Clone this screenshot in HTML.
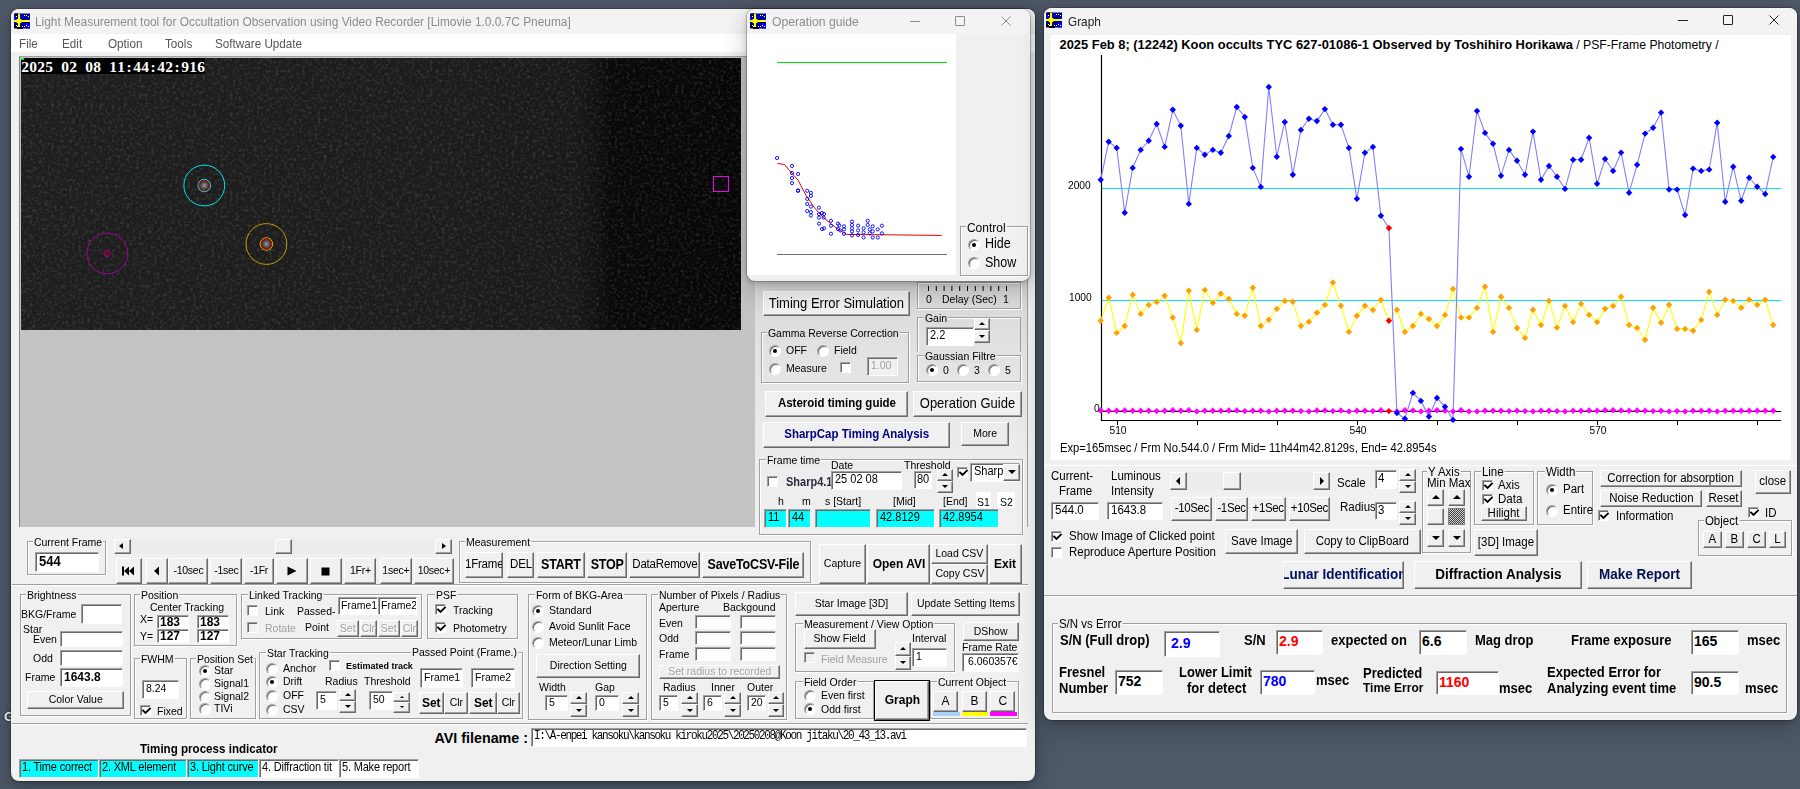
<!DOCTYPE html><html><head><meta charset="utf-8"><style>
*{margin:0;padding:0;box-sizing:border-box}
html,body{width:1800px;height:789px;overflow:hidden;background:#4e5868;font-family:"Liberation Sans",sans-serif;color:#000}
div{position:absolute}
.t{white-space:nowrap}
.win{background:#f0f0f0;border-radius:8px;box-shadow:0 0 0 1px rgba(0,0,0,.2),0 2px 6px rgba(0,0,0,.2),0 8px 26px rgba(0,0,0,.22)}
.tb{background:#f3f3f3;border-radius:8px 8px 0 0}
.btn{display:flex;justify-content:center;align-items:flex-start;background:#f0f0f0;border-top:1px solid #fff;border-left:1px solid #fff;border-right:1px solid #696969;border-bottom:1px solid #696969;box-shadow:inset -1px -1px 0 #a0a0a0;text-align:center;white-space:nowrap;overflow:hidden}
.inp{background:#fff;border-top:1px solid #a0a0a0;border-left:1px solid #a0a0a0;border-right:1px solid #fff;border-bottom:1px solid #fff;box-shadow:inset 1px 1px 0 #696969;padding-left:3px;white-space:nowrap;overflow:hidden}
.gb{border:1px solid #a0a0a0;box-shadow:inset 1px 1px 0 #fff,1px 1px 0 #fff}
.gbl{background:#f0f0f0;padding:0 1px}
.chk{border-top:1px solid #a0a0a0;border-left:1px solid #a0a0a0;border-right:1px solid #fff;border-bottom:1px solid #fff;box-shadow:inset 1px 1px 0 #696969;box-sizing:content-box}
.rad{border-radius:50%;background:#fff;border:1px solid;border-color:#a0a0a0 #fff #fff #a0a0a0;box-shadow:inset 1px 1px 0 #696969;box-sizing:content-box}
</style></head><body><div class="t" style="left:4px;top:709px;font-size:13px;line-height:15px;color:#fff;text-shadow:0 0 1px #000,0 0 1px #000;font-weight:bold">G</div>
<div class="win" style="left:11px;top:9px;width:1024px;height:772px;"></div>
<div class="tb" style="left:11px;top:9px;width:1024px;height:25px;"></div>
<svg style="position:absolute;left:14px;top:13px" width="16" height="16" viewBox="0 0 16 16"><rect x="0" y="0.5" width="16" height="15" fill="#000090"/><rect x="0" y="3" width="3" height="4" fill="#0000ff"/><rect x="7" y="3" width="3" height="2" fill="#0000ff"/><rect x="13" y="5" width="3" height="3" fill="#0000ff"/><rect x="12" y="10" width="4" height="5.5" fill="#0000ff"/><rect x="0" y="12" width="3" height="3" fill="#000"/><rect x="3" y="14.5" width="6" height="1.5" fill="#000"/><rect x="1" y="0.5" width="3" height="1.5" fill="#000"/><path d="M4 1 H6 V5.5 L8 7 H16 V9 H8 L6 10.5 V14 H4 V10.5 L2 9 H0 V7 H2 L4 5.5 Z" fill="#ffff00"/><g fill="#fff"><rect x="2" y="3" width="1" height="1"/><rect x="10" y="2" width="1" height="1"/><rect x="12" y="2" width="1" height="1"/><rect x="14" y="3" width="1" height="1"/><rect x="2" y="12" width="1" height="1"/><rect x="3" y="13" width="1" height="1"/><rect x="8" y="13" width="1" height="1"/><rect x="10" y="13" width="1" height="1"/><rect x="12" y="12" width="1" height="1"/><rect x="14" y="13" width="1" height="1"/></g></svg>
<div class="t" style="left:35px;top:14.0px;font-size:13.09px;line-height:15px;transform:scaleX(0.9091);transform-origin:0 50%;color:#8c8c8c;">Light Measurement tool for Occultation Observation using Video Recorder [Limovie 1.0.0.7C Pneuma]</div>
<div class="" style="left:11px;top:34px;width:1024px;height:18px;background:#fff"></div>
<div class="t" style="left:19px;top:36.0px;font-size:12.87px;line-height:15px;transform:scaleX(0.9091);transform-origin:0 50%;color:#555;">File</div>
<div class="t" style="left:62px;top:36.0px;font-size:12.87px;line-height:15px;transform:scaleX(0.9091);transform-origin:0 50%;color:#555;">Edit</div>
<div class="t" style="left:108px;top:36.0px;font-size:12.87px;line-height:15px;transform:scaleX(0.9091);transform-origin:0 50%;color:#555;">Option</div>
<div class="t" style="left:165px;top:36.0px;font-size:12.87px;line-height:15px;transform:scaleX(0.9091);transform-origin:0 50%;color:#555;">Tools</div>
<div class="t" style="left:215px;top:36.0px;font-size:12.87px;line-height:15px;transform:scaleX(0.9091);transform-origin:0 50%;color:#555;">Software Update</div>
<div class="" style="left:19px;top:56px;width:737px;height:471px;background:#c3c3c3;border-top:1px solid #a0a0a0;border-left:1px solid #808080"></div>
<div class="" style="left:21px;top:58px;width:720px;height:272px;background:linear-gradient(90deg,#1e1e1e 0%,#1c1c1c 60%,#191919 77%,#111 80%,#090909 82%,#070707 100%)"></div>
<svg style="position:absolute;left:21px;top:58px" width="720" height="272"><filter id="nz"><feTurbulence type="fractalNoise" baseFrequency="0.33" numOctaves="3" seed="4"/><feColorMatrix values="0 0 0 0 1  0 0 0 0 1  0 0 0 0 1  0 0 0 1.6 -0.75"/></filter><rect width="720" height="272" filter="url(#nz)" opacity="0.2"/></svg>
<div class="" style="left:21px;top:58px;width:184px;height:16px;background:#000"></div>
<div class="t" style="left:21px;top:58px;height:16px;line-height:17px;font-family:'Liberation Serif',serif;font-size:15.5px;font-weight:bold;color:#fff"><span style="position:absolute;left:0px;width:8px;text-align:center;display:inline-block">2</span><span style="position:absolute;left:8px;width:8px;text-align:center;display:inline-block">0</span><span style="position:absolute;left:16px;width:8px;text-align:center;display:inline-block">2</span><span style="position:absolute;left:24px;width:8px;text-align:center;display:inline-block">5</span><span style="position:absolute;left:32px;width:8px;text-align:center;display:inline-block"> </span><span style="position:absolute;left:40px;width:8px;text-align:center;display:inline-block">0</span><span style="position:absolute;left:48px;width:8px;text-align:center;display:inline-block">2</span><span style="position:absolute;left:56px;width:8px;text-align:center;display:inline-block"> </span><span style="position:absolute;left:64px;width:8px;text-align:center;display:inline-block">0</span><span style="position:absolute;left:72px;width:8px;text-align:center;display:inline-block">8</span><span style="position:absolute;left:80px;width:8px;text-align:center;display:inline-block"> </span><span style="position:absolute;left:88px;width:8px;text-align:center;display:inline-block">1</span><span style="position:absolute;left:96px;width:8px;text-align:center;display:inline-block">1</span><span style="position:absolute;left:104px;width:8px;text-align:center;display:inline-block">:</span><span style="position:absolute;left:112px;width:8px;text-align:center;display:inline-block">4</span><span style="position:absolute;left:120px;width:8px;text-align:center;display:inline-block">4</span><span style="position:absolute;left:128px;width:8px;text-align:center;display:inline-block">:</span><span style="position:absolute;left:136px;width:8px;text-align:center;display:inline-block">4</span><span style="position:absolute;left:144px;width:8px;text-align:center;display:inline-block">2</span><span style="position:absolute;left:152px;width:8px;text-align:center;display:inline-block">:</span><span style="position:absolute;left:160px;width:8px;text-align:center;display:inline-block">9</span><span style="position:absolute;left:168px;width:8px;text-align:center;display:inline-block">1</span><span style="position:absolute;left:176px;width:8px;text-align:center;display:inline-block">6</span></div>
<svg style="position:absolute;left:21px;top:58px" width="720" height="272" viewBox="21 58 720 272">
<defs><radialGradient id="sg"><stop offset="0" stop-color="#9a9a9a"/><stop offset="1" stop-color="#2a2a2a"/></radialGradient></defs>
<circle cx="204.3" cy="185.5" r="5" fill="url(#sg)"/>
<circle cx="266.4" cy="244" r="5" fill="url(#sg)"/>
<circle cx="204.3" cy="185.5" r="20.4" fill="none" stroke="#00e5f0" stroke-width="1"/>
<circle cx="204.3" cy="185.5" r="6.3" fill="none" stroke="#00e5f0" stroke-width="1"/>
<circle cx="204.3" cy="185.5" r="5.2" fill="none" stroke="#e00000" stroke-width="1"/>
<circle cx="266.4" cy="244" r="20.4" fill="none" stroke="#b8a000" stroke-width="1"/>
<circle cx="266.4" cy="244" r="6.3" fill="none" stroke="#d0b000" stroke-width="1"/>
<circle cx="266.4" cy="244" r="5.2" fill="none" stroke="#e00000" stroke-width="1"/>
<circle cx="107.3" cy="253.4" r="20.4" fill="none" stroke="#a000a0" stroke-width="1"/>
<circle cx="107.3" cy="253.4" r="3.2" fill="none" stroke="#a000a0" stroke-width="1"/>
<circle cx="107.3" cy="253.4" r="1.8" fill="#900000"/>
<rect x="713.5" y="176.5" width="15" height="15" fill="none" stroke="#f000f0" stroke-width="1"/>
<rect x="21" y="58" width="3" height="2" fill="#00ff00"/>
</svg>
<div class="gb" style="left:27px;top:541px;width:79px;height:34px;"></div>
<div class="t gbl" style="left:33px;top:535.5px;font-size:11.55px;line-height:13px;transform:scaleX(0.9091);transform-origin:0 50%;">Current Frame</div>
<div class="inp" style="left:35px;top:552px;width:64px;height:20px;font-size:14.30px;line-height:16px;text-align:left;font-weight:bold;"><span style="display:inline-block;transform:scaleX(0.9091);transform-origin:0 50%">544</span></div>
<div class="" style="left:114px;top:539px;width:338px;height:15px;background:repeating-conic-gradient(#f4f4f4 0 25%,#e4e4e4 0 50%) 0 0/2px 2px"></div>
<div class="btn" style="left:114px;top:539px;width:17px;height:15px;font-size:11.55px;line-height:12px;"><span style="position:static;display:inline-block;transform:scaleX(0.9091);"></span></div>
<div style="left:119px;top:543px;width:0;height:0;border-top:3.5px solid transparent;border-bottom:3.5px solid transparent;border-right:4px solid #000"></div>
<div class="btn" style="left:435px;top:539px;width:17px;height:15px;font-size:11.55px;line-height:12px;"><span style="position:static;display:inline-block;transform:scaleX(0.9091);"></span></div>
<div style="left:442px;top:543px;width:0;height:0;border-top:3.5px solid transparent;border-bottom:3.5px solid transparent;border-left:4px solid #000"></div>
<div class="btn" style="left:275px;top:539px;width:17px;height:15px;font-size:11.55px;line-height:12px;"><span style="position:static;display:inline-block;transform:scaleX(0.9091);"></span></div>
<div class="btn" style="left:116px;top:558px;width:26px;height:26px;font-size:11.55px;line-height:23px;letter-spacing:-0.3px"><span style="position:static;display:inline-block;transform:scaleX(0.9091);"></span></div>
<div class="btn" style="left:146px;top:558px;width:22px;height:26px;font-size:11.55px;line-height:23px;letter-spacing:-0.3px"><span style="position:static;display:inline-block;transform:scaleX(0.9091);"></span></div>
<div class="btn" style="left:168px;top:558px;width:40px;height:26px;font-size:11.55px;line-height:23px;letter-spacing:-0.3px"><span style="position:static;display:inline-block;transform:scaleX(0.9091);">-10sec</span></div>
<div class="btn" style="left:210px;top:558px;width:32px;height:26px;font-size:11.55px;line-height:23px;letter-spacing:-0.3px"><span style="position:static;display:inline-block;transform:scaleX(0.9091);">-1sec</span></div>
<div class="btn" style="left:244px;top:558px;width:30px;height:26px;font-size:11.55px;line-height:23px;letter-spacing:-0.3px"><span style="position:static;display:inline-block;transform:scaleX(0.9091);">-1Fr</span></div>
<div class="btn" style="left:276px;top:558px;width:32px;height:26px;font-size:11.55px;line-height:23px;letter-spacing:-0.3px"><span style="position:static;display:inline-block;transform:scaleX(0.9091);"></span></div>
<div class="btn" style="left:310px;top:558px;width:32px;height:26px;font-size:11.55px;line-height:23px;letter-spacing:-0.3px"><span style="position:static;display:inline-block;transform:scaleX(0.9091);"></span></div>
<div class="btn" style="left:344px;top:558px;width:32px;height:26px;font-size:11.55px;line-height:23px;letter-spacing:-0.3px"><span style="position:static;display:inline-block;transform:scaleX(0.9091);">1Fr+</span></div>
<div class="btn" style="left:380px;top:558px;width:32px;height:26px;font-size:11.55px;line-height:23px;letter-spacing:-0.3px"><span style="position:static;display:inline-block;transform:scaleX(0.9091);">1sec+</span></div>
<div class="btn" style="left:414px;top:558px;width:40px;height:26px;font-size:11.55px;line-height:23px;letter-spacing:-0.3px"><span style="position:static;display:inline-block;transform:scaleX(0.9091);">10sec+</span></div>
<svg style="position:absolute;left:121px;top:566px" width="16" height="10" viewBox="0 0 16 10"><rect x="1" y="0.5" width="2" height="9"/><path d="M3 5 L8 0.5 L8 9.5Z M8 5 L13 0.5 L13 9.5Z"/></svg>
<svg style="position:absolute;left:152px;top:566px" width="10" height="10" viewBox="0 0 10 10"><path d="M2 5 L7 0.5 L7 9.5Z"/></svg>
<svg style="position:absolute;left:286px;top:566px" width="12" height="10" viewBox="0 0 12 10"><path d="M1.5 0.5 L10.5 5 L1.5 9.5Z"/></svg>
<svg style="position:absolute;left:321px;top:567px" width="10" height="9" viewBox="0 0 10 9"><rect x="0.5" y="0.5" width="8" height="8"/></svg>
<div class="gb" style="left:459px;top:541px;width:352px;height:42px;"></div>
<div class="t gbl" style="left:465px;top:535.5px;font-size:11.55px;line-height:13px;transform:scaleX(0.9091);transform-origin:0 50%;">Measurement</div>
<div class="btn" style="left:465px;top:552px;width:38px;height:26px;font-size:12.65px;line-height:23px;letter-spacing:-0.2px"><span style="position:static;display:inline-block;transform:scaleX(0.9091);">1Frame</span></div>
<div class="btn" style="left:507px;top:552px;width:27px;height:26px;font-size:12.65px;line-height:23px;letter-spacing:-0.2px"><span style="position:static;display:inline-block;transform:scaleX(0.9091);">DEL</span></div>
<div class="btn" style="left:537px;top:552px;width:48px;height:26px;font-size:13.75px;line-height:23px;font-weight:bold;letter-spacing:-0.2px"><span style="position:static;display:inline-block;transform:scaleX(0.9091);">START</span></div>
<div class="btn" style="left:587px;top:552px;width:40px;height:26px;font-size:13.75px;line-height:23px;font-weight:bold;letter-spacing:-0.2px"><span style="position:static;display:inline-block;transform:scaleX(0.9091);">STOP</span></div>
<div class="btn" style="left:629px;top:552px;width:71px;height:26px;font-size:12.65px;line-height:23px;letter-spacing:-0.2px"><span style="position:static;display:inline-block;transform:scaleX(0.9091);">DataRemove</span></div>
<div class="btn" style="left:702px;top:552px;width:102px;height:26px;font-size:13.75px;line-height:23px;font-weight:bold;letter-spacing:-0.2px"><span style="position:static;display:inline-block;transform:scaleX(0.9091);">SaveToCSV-File</span></div>
<div class="btn" style="left:819px;top:544px;width:47px;height:40px;font-size:11.55px;line-height:37px;"><span style="position:static;display:inline-block;transform:scaleX(0.9091);">Capture</span></div>
<div class="btn" style="left:867px;top:544px;width:63px;height:40px;font-size:13.20px;line-height:37px;font-weight:bold;"><span style="position:static;display:inline-block;transform:scaleX(0.9091);">Open AVI</span></div>
<div class="btn" style="left:931px;top:544px;width:57px;height:20px;font-size:11.55px;line-height:17px;"><span style="position:static;display:inline-block;transform:scaleX(0.9091);">Load CSV</span></div>
<div class="btn" style="left:931px;top:564px;width:57px;height:20px;font-size:11.55px;line-height:17px;"><span style="position:static;display:inline-block;transform:scaleX(0.9091);">Copy CSV</span></div>
<div class="btn" style="left:989px;top:544px;width:33px;height:40px;font-size:13.20px;line-height:37px;font-weight:bold;"><span style="position:static;display:inline-block;transform:scaleX(0.9091);">Exit</span></div>
<div class="" style="left:12px;top:584px;width:1016px;height:2px;border-top:1px solid #a0a0a0;border-bottom:1px solid #fff"></div>
<div class="gb" style="left:20px;top:594px;width:111px;height:122px;"></div>
<div class="t gbl" style="left:26px;top:588.5px;font-size:11.55px;line-height:13px;transform:scaleX(0.9091);transform-origin:0 50%;">Brightness</div>
<div class="t" style="left:21px;top:606.5px;font-size:11.55px;line-height:14px;transform:scaleX(0.9091);transform-origin:0 50%;">BKG/Frame</div>
<div class="inp" style="left:81px;top:604px;width:41px;height:20px;font-size:11.55px;line-height:16px;text-align:left;"><span style="display:inline-block;transform:scaleX(0.9091);transform-origin:0 50%"></span></div>
<div class="t" style="left:23px;top:622.0px;font-size:11.55px;line-height:14px;transform:scaleX(0.9091);transform-origin:0 50%;">Star</div>
<div class="t" style="left:33px;top:631.5px;font-size:11.55px;line-height:14px;transform:scaleX(0.9091);transform-origin:0 50%;">Even</div>
<div class="inp" style="left:60px;top:631px;width:63px;height:16px;font-size:11.55px;line-height:12px;text-align:left;"><span style="display:inline-block;transform:scaleX(0.9091);transform-origin:0 50%"></span></div>
<div class="t" style="left:33px;top:650.5px;font-size:11.55px;line-height:14px;transform:scaleX(0.9091);transform-origin:0 50%;">Odd</div>
<div class="inp" style="left:60px;top:650px;width:63px;height:16px;font-size:11.55px;line-height:12px;text-align:left;"><span style="display:inline-block;transform:scaleX(0.9091);transform-origin:0 50%"></span></div>
<div class="t" style="left:25px;top:670.0px;font-size:11.55px;line-height:14px;transform:scaleX(0.9091);transform-origin:0 50%;">Frame</div>
<div class="inp" style="left:60px;top:668px;width:63px;height:19px;font-size:13.20px;line-height:15px;text-align:left;font-weight:bold;"><span style="display:inline-block;transform:scaleX(0.9091);transform-origin:0 50%">1643.8</span></div>
<div class="btn" style="left:27px;top:691px;width:97px;height:18px;font-size:11.55px;line-height:15px;"><span style="position:static;display:inline-block;transform:scaleX(0.9091);">Color Value</span></div>
<div class="gb" style="left:134px;top:594px;width:103px;height:52px;"></div>
<div class="t gbl" style="left:140px;top:588.5px;font-size:11.55px;line-height:13px;transform:scaleX(0.9091);transform-origin:0 50%;">Position</div>
<div class="t" style="left:150px;top:600.0px;font-size:11.55px;line-height:14px;transform:scaleX(0.9091);transform-origin:0 50%;">Center Tracking</div>
<div class="t" style="left:140px;top:611.7px;font-size:11.55px;line-height:14px;transform:scaleX(0.9091);transform-origin:0 50%;">X=</div>
<div class="t" style="left:140px;top:628.5px;font-size:11.55px;line-height:14px;transform:scaleX(0.9091);transform-origin:0 50%;">Y=</div>
<div class="inp" style="left:157px;top:615px;width:32px;height:14px;font-size:13.20px;line-height:10px;text-align:left;font-weight:bold;line-height:12px;padding-left:2px"><span style="display:inline-block;transform:scaleX(0.9091);transform-origin:0 50%">183</span></div>
<div class="inp" style="left:197px;top:615px;width:32px;height:14px;font-size:13.20px;line-height:10px;text-align:left;font-weight:bold;line-height:12px;padding-left:2px"><span style="display:inline-block;transform:scaleX(0.9091);transform-origin:0 50%">183</span></div>
<div class="inp" style="left:157px;top:629px;width:32px;height:14px;font-size:13.20px;line-height:10px;text-align:left;font-weight:bold;line-height:12px;padding-left:2px"><span style="display:inline-block;transform:scaleX(0.9091);transform-origin:0 50%">127</span></div>
<div class="inp" style="left:197px;top:629px;width:32px;height:14px;font-size:13.20px;line-height:10px;text-align:left;font-weight:bold;line-height:12px;padding-left:2px"><span style="display:inline-block;transform:scaleX(0.9091);transform-origin:0 50%">127</span></div>
<div class="gb" style="left:134px;top:658px;width:53px;height:61px;"></div>
<div class="t gbl" style="left:140px;top:652.5px;font-size:11.55px;line-height:13px;transform:scaleX(0.9091);transform-origin:0 50%;">FWHM</div>
<div class="inp" style="left:142px;top:680px;width:37px;height:19px;font-size:11.55px;line-height:15px;text-align:left;"><span style="display:inline-block;transform:scaleX(0.9091);transform-origin:0 50%">8.24</span></div>
<div class="chk" style="left:140px;top:705px;width:9px;height:9px;background:#fff"><svg width="9" height="9" viewBox="0 0 9 9" style="position:absolute;left:1px;top:1px"><path d="M1 3.5 L3.5 6 L8 1.5" stroke="#000" stroke-width="1.9" fill="none" stroke-linecap="square"/></svg></div>
<div class="t" style="left:157px;top:703.5px;font-size:11.55px;line-height:14px;transform:scaleX(0.9091);transform-origin:0 50%;">Fixed</div>
<div class="gb" style="left:190px;top:658px;width:66px;height:61px;"></div>
<div class="t gbl" style="left:196px;top:652.5px;font-size:11.55px;line-height:13px;transform:scaleX(0.9091);transform-origin:0 50%;">Position Set</div>
<div class="rad" style="left:199px;top:665.2px;width:10px;height:10px;"><div style="position:absolute;left:3px;top:3px;width:4px;height:4px;border-radius:2px;background:#000"></div></div>
<div class="t" style="left:214px;top:663.2px;font-size:11.55px;line-height:14px;transform:scaleX(0.9091);transform-origin:0 50%;">Star</div>
<div class="rad" style="left:199px;top:677.5px;width:10px;height:10px;"></div>
<div class="t" style="left:214px;top:675.5px;font-size:11.55px;line-height:14px;transform:scaleX(0.9091);transform-origin:0 50%;">Signal1</div>
<div class="rad" style="left:199px;top:690.5px;width:10px;height:10px;"></div>
<div class="t" style="left:214px;top:688.5px;font-size:11.55px;line-height:14px;transform:scaleX(0.9091);transform-origin:0 50%;">Signal2</div>
<div class="rad" style="left:199px;top:703.3px;width:10px;height:10px;"></div>
<div class="t" style="left:214px;top:701.3px;font-size:11.55px;line-height:14px;transform:scaleX(0.9091);transform-origin:0 50%;">TIVi</div>
<div class="gb" style="left:241px;top:594px;width:181px;height:45px;"></div>
<div class="t gbl" style="left:248px;top:588.5px;font-size:11.55px;line-height:13px;transform:scaleX(0.9091);transform-origin:0 50%;">Linked Tracking</div>
<div class="chk" style="left:247px;top:605px;width:9px;height:9px;background:#fff"></div>
<div class="t" style="left:265px;top:603.5px;font-size:11.55px;line-height:14px;transform:scaleX(0.9091);transform-origin:0 50%;">Link</div>
<div class="t" style="left:297px;top:604.0px;font-size:11.55px;line-height:14px;transform:scaleX(0.9091);transform-origin:0 50%;">Passed-</div>
<div class="inp" style="left:338px;top:597px;width:40px;height:18px;font-size:11.55px;line-height:14px;text-align:left;padding-left:2px"><span style="display:inline-block;transform:scaleX(0.9091);transform-origin:0 50%">Frame1</span></div>
<div class="inp" style="left:378px;top:597px;width:39px;height:18px;font-size:11.55px;line-height:14px;text-align:left;padding-left:2px"><span style="display:inline-block;transform:scaleX(0.9091);transform-origin:0 50%">Frame2</span></div>
<div class="chk" style="left:247px;top:622px;width:9px;height:9px;background:#f0f0f0"></div>
<div class="t" style="left:265px;top:621.0px;font-size:11.55px;line-height:14px;transform:scaleX(0.9091);transform-origin:0 50%;color:#a0a0a0;">Rotate</div>
<div class="t" style="left:305px;top:620.0px;font-size:11.55px;line-height:14px;transform:scaleX(0.9091);transform-origin:0 50%;">Point</div>
<div class="btn" style="left:337px;top:620px;width:22px;height:17px;font-size:11.55px;line-height:14px;color:#a0a0a0;text-shadow:1px 1px 0 #fff"><span style="position:static;display:inline-block;transform:scaleX(0.9091);">Set</span></div>
<div class="btn" style="left:360px;top:620px;width:17px;height:17px;font-size:11.55px;line-height:14px;color:#a0a0a0;text-shadow:1px 1px 0 #fff"><span style="position:static;display:inline-block;transform:scaleX(0.9091);">Clr</span></div>
<div class="btn" style="left:378px;top:620px;width:22px;height:17px;font-size:11.55px;line-height:14px;color:#a0a0a0;text-shadow:1px 1px 0 #fff"><span style="position:static;display:inline-block;transform:scaleX(0.9091);">Set</span></div>
<div class="btn" style="left:401px;top:620px;width:17px;height:17px;font-size:11.55px;line-height:14px;color:#a0a0a0;text-shadow:1px 1px 0 #fff"><span style="position:static;display:inline-block;transform:scaleX(0.9091);">Clr</span></div>
<div class="gb" style="left:427px;top:594px;width:91px;height:45px;"></div>
<div class="t gbl" style="left:435px;top:588.5px;font-size:11.55px;line-height:13px;transform:scaleX(0.9091);transform-origin:0 50%;">PSF</div>
<div class="chk" style="left:435px;top:604px;width:9px;height:9px;background:#fff"><svg width="9" height="9" viewBox="0 0 9 9" style="position:absolute;left:1px;top:1px"><path d="M1 3.5 L3.5 6 L8 1.5" stroke="#000" stroke-width="1.9" fill="none" stroke-linecap="square"/></svg></div>
<div class="t" style="left:453px;top:603.0px;font-size:11.55px;line-height:14px;transform:scaleX(0.9091);transform-origin:0 50%;">Tracking</div>
<div class="chk" style="left:435px;top:622px;width:9px;height:9px;background:#fff"><svg width="9" height="9" viewBox="0 0 9 9" style="position:absolute;left:1px;top:1px"><path d="M1 3.5 L3.5 6 L8 1.5" stroke="#000" stroke-width="1.9" fill="none" stroke-linecap="square"/></svg></div>
<div class="t" style="left:453px;top:621.0px;font-size:11.55px;line-height:14px;transform:scaleX(0.9091);transform-origin:0 50%;">Photometry</div>
<div class="gb" style="left:259px;top:652px;width:264px;height:67px;"></div>
<div class="t gbl" style="left:266px;top:646.5px;font-size:11.55px;line-height:13px;transform:scaleX(0.9091);transform-origin:0 50%;">Star Tracking</div>
<div class="t" style="left:411px;top:645.4px;font-size:11.55px;line-height:14px;transform:scaleX(0.9091);transform-origin:0 50%;background:#f0f0f0;padding:0 1px">Passed Point (Frame.)</div>
<div class="rad" style="left:266px;top:663px;width:10px;height:10px;"></div>
<div class="t" style="left:283px;top:661.0px;font-size:11.55px;line-height:14px;transform:scaleX(0.9091);transform-origin:0 50%;">Anchor</div>
<div class="rad" style="left:266px;top:675.8px;width:10px;height:10px;"><div style="position:absolute;left:3px;top:3px;width:4px;height:4px;border-radius:2px;background:#000"></div></div>
<div class="t" style="left:283px;top:673.8px;font-size:11.55px;line-height:14px;transform:scaleX(0.9091);transform-origin:0 50%;">Drift</div>
<div class="rad" style="left:266px;top:689.6px;width:10px;height:10px;"></div>
<div class="t" style="left:283px;top:687.6px;font-size:11.55px;line-height:14px;transform:scaleX(0.9091);transform-origin:0 50%;">OFF</div>
<div class="rad" style="left:266px;top:703.6px;width:10px;height:10px;"></div>
<div class="t" style="left:283px;top:701.6px;font-size:11.55px;line-height:14px;transform:scaleX(0.9091);transform-origin:0 50%;">CSV</div>
<div class="chk" style="left:329px;top:660px;width:9px;height:9px;background:#fff"></div>
<div class="t" style="left:346px;top:659.5px;font-size:9.90px;line-height:12px;transform:scaleX(0.9091);transform-origin:0 50%;font-weight:bold;">Estimated track</div>
<div class="t" style="left:325px;top:673.8px;font-size:11.55px;line-height:14px;transform:scaleX(0.9091);transform-origin:0 50%;">Radius</div>
<div class="t" style="left:364px;top:673.8px;font-size:11.55px;line-height:14px;transform:scaleX(0.9091);transform-origin:0 50%;">Threshold</div>
<div class="inp" style="left:316px;top:691px;width:21px;height:19px;font-size:11.55px;line-height:15px;text-align:left;"><span style="display:inline-block;transform:scaleX(0.9091);transform-origin:0 50%">5</span></div>
<div class="btn" style="left:339px;top:689px;width:17px;height:12px;"><div style="position:absolute;left:50%;top:50%;margin-left:-3px;margin-top:-2.0px;width:0;height:0;border-left:3px solid transparent;border-right:3px solid transparent;border-bottom:3px solid #000;"></div></div>
<div class="btn" style="left:339px;top:701px;width:17px;height:12px;"><div style="position:absolute;left:50%;top:50%;margin-left:-3px;margin-top:-2.0px;width:0;height:0;border-left:3px solid transparent;border-right:3px solid transparent;border-top:3px solid #000;"></div></div>
<div class="inp" style="left:369px;top:691px;width:24px;height:19px;font-size:11.55px;line-height:15px;text-align:left;"><span style="display:inline-block;transform:scaleX(0.9091);transform-origin:0 50%">50</span></div>
<div class="btn" style="left:393px;top:692px;width:17px;height:10px;"><div style="position:absolute;left:50%;top:50%;margin-left:-2px;margin-top:-1.5px;width:0;height:0;border-left:2px solid transparent;border-right:2px solid transparent;border-bottom:2px solid #000;"></div></div>
<div class="btn" style="left:393px;top:702px;width:17px;height:11px;"><div style="position:absolute;left:50%;top:50%;margin-left:-2px;margin-top:-1.5px;width:0;height:0;border-left:2px solid transparent;border-right:2px solid transparent;border-top:2px solid #000;"></div></div>
<div class="inp" style="left:420px;top:668px;width:43px;height:20px;font-size:11.55px;line-height:16px;text-align:left;"><span style="display:inline-block;transform:scaleX(0.9091);transform-origin:0 50%">Frame1</span></div>
<div class="inp" style="left:471px;top:668px;width:44px;height:20px;font-size:11.55px;line-height:16px;text-align:left;"><span style="display:inline-block;transform:scaleX(0.9091);transform-origin:0 50%">Frame2</span></div>
<div class="btn" style="left:419px;top:692px;width:25px;height:22px;font-size:13.20px;line-height:19px;font-weight:bold;"><span style="position:static;display:inline-block;transform:scaleX(0.9091);">Set</span></div>
<div class="btn" style="left:444px;top:692px;width:24px;height:22px;font-size:11.55px;line-height:19px;"><span style="position:static;display:inline-block;transform:scaleX(0.9091);">Clr</span></div>
<div class="btn" style="left:469px;top:692px;width:28px;height:22px;font-size:13.20px;line-height:19px;font-weight:bold;"><span style="position:static;display:inline-block;transform:scaleX(0.9091);">Set</span></div>
<div class="btn" style="left:497px;top:692px;width:23px;height:22px;font-size:11.55px;line-height:19px;"><span style="position:static;display:inline-block;transform:scaleX(0.9091);">Clr</span></div>
<div class="gb" style="left:528px;top:594px;width:119px;height:126px;"></div>
<div class="t gbl" style="left:535px;top:588.5px;font-size:11.55px;line-height:13px;transform:scaleX(0.9091);transform-origin:0 50%;">Form of BKG-Area</div>
<div class="rad" style="left:532px;top:605px;width:10px;height:10px;"><div style="position:absolute;left:3px;top:3px;width:4px;height:4px;border-radius:2px;background:#000"></div></div>
<div class="t" style="left:549px;top:603.0px;font-size:11.55px;line-height:14px;transform:scaleX(0.9091);transform-origin:0 50%;">Standard</div>
<div class="rad" style="left:532px;top:620.7px;width:10px;height:10px;"></div>
<div class="t" style="left:549px;top:618.7px;font-size:11.55px;line-height:14px;transform:scaleX(0.9091);transform-origin:0 50%;">Avoid Sunlit Face</div>
<div class="rad" style="left:532px;top:636.8px;width:10px;height:10px;"></div>
<div class="t" style="left:549px;top:634.8px;font-size:11.55px;line-height:14px;transform:scaleX(0.9091);transform-origin:0 50%;">Meteor/Lunar Limb</div>
<div class="btn" style="left:536px;top:654px;width:104px;height:24px;font-size:11.55px;line-height:21px;"><span style="position:static;display:inline-block;transform:scaleX(0.9091);">Direction Setting</span></div>
<div class="t" style="left:539px;top:680.0px;font-size:11.55px;line-height:14px;transform:scaleX(0.9091);transform-origin:0 50%;">Width</div>
<div class="t" style="left:595px;top:680.0px;font-size:11.55px;line-height:14px;transform:scaleX(0.9091);transform-origin:0 50%;">Gap</div>
<div class="inp" style="left:545px;top:695px;width:23px;height:16px;font-size:11.55px;line-height:12px;text-align:left;"><span style="display:inline-block;transform:scaleX(0.9091);transform-origin:0 50%">5</span></div>
<div class="btn" style="left:570px;top:692px;width:17px;height:12px;"><div style="position:absolute;left:50%;top:50%;margin-left:-3px;margin-top:-2.0px;width:0;height:0;border-left:3px solid transparent;border-right:3px solid transparent;border-bottom:3px solid #000;"></div></div>
<div class="btn" style="left:570px;top:704px;width:17px;height:13px;"><div style="position:absolute;left:50%;top:50%;margin-left:-3px;margin-top:-2.0px;width:0;height:0;border-left:3px solid transparent;border-right:3px solid transparent;border-top:3px solid #000;"></div></div>
<div class="inp" style="left:595px;top:695px;width:24px;height:16px;font-size:11.55px;line-height:12px;text-align:left;"><span style="display:inline-block;transform:scaleX(0.9091);transform-origin:0 50%">0</span></div>
<div class="btn" style="left:622px;top:692px;width:17px;height:12px;"><div style="position:absolute;left:50%;top:50%;margin-left:-3px;margin-top:-2.0px;width:0;height:0;border-left:3px solid transparent;border-right:3px solid transparent;border-bottom:3px solid #000;"></div></div>
<div class="btn" style="left:622px;top:704px;width:17px;height:13px;"><div style="position:absolute;left:50%;top:50%;margin-left:-3px;margin-top:-2.0px;width:0;height:0;border-left:3px solid transparent;border-right:3px solid transparent;border-top:3px solid #000;"></div></div>
<div class="gb" style="left:651px;top:594px;width:136px;height:126px;"></div>
<div class="t gbl" style="left:658px;top:588.5px;font-size:11.55px;line-height:13px;transform:scaleX(0.9091);transform-origin:0 50%;">Number of Pixels / Radius</div>
<div class="t" style="left:659px;top:600.2px;font-size:11.55px;line-height:14px;transform:scaleX(0.9091);transform-origin:0 50%;">Aperture</div>
<div class="t" style="left:723px;top:600.2px;font-size:11.55px;line-height:14px;transform:scaleX(0.9091);transform-origin:0 50%;">Backgound</div>
<div class="t" style="left:659px;top:616.0px;font-size:11.55px;line-height:14px;transform:scaleX(0.9091);transform-origin:0 50%;">Even</div>
<div class="t" style="left:659px;top:631.0px;font-size:11.55px;line-height:14px;transform:scaleX(0.9091);transform-origin:0 50%;">Odd</div>
<div class="t" style="left:659px;top:646.8px;font-size:11.55px;line-height:14px;transform:scaleX(0.9091);transform-origin:0 50%;">Frame</div>
<div class="inp" style="left:695px;top:615px;width:36px;height:14px;font-size:11.55px;line-height:10px;text-align:left;"><span style="display:inline-block;transform:scaleX(0.9091);transform-origin:0 50%"></span></div>
<div class="inp" style="left:740px;top:615px;width:36px;height:14px;font-size:11.55px;line-height:10px;text-align:left;"><span style="display:inline-block;transform:scaleX(0.9091);transform-origin:0 50%"></span></div>
<div class="inp" style="left:695px;top:631px;width:36px;height:14px;font-size:11.55px;line-height:10px;text-align:left;"><span style="display:inline-block;transform:scaleX(0.9091);transform-origin:0 50%"></span></div>
<div class="inp" style="left:740px;top:631px;width:36px;height:14px;font-size:11.55px;line-height:10px;text-align:left;"><span style="display:inline-block;transform:scaleX(0.9091);transform-origin:0 50%"></span></div>
<div class="inp" style="left:695px;top:647px;width:36px;height:14px;font-size:11.55px;line-height:10px;text-align:left;"><span style="display:inline-block;transform:scaleX(0.9091);transform-origin:0 50%"></span></div>
<div class="inp" style="left:740px;top:647px;width:36px;height:14px;font-size:11.55px;line-height:10px;text-align:left;"><span style="display:inline-block;transform:scaleX(0.9091);transform-origin:0 50%"></span></div>
<div class="btn" style="left:659px;top:665px;width:121px;height:14px;font-size:11.55px;line-height:11px;color:#a0a0a0;text-shadow:1px 1px 0 #fff"><span style="position:static;display:inline-block;transform:scaleX(0.9091);">Set  radius to recorded</span></div>
<div class="t" style="left:663px;top:680.0px;font-size:11.55px;line-height:14px;transform:scaleX(0.9091);transform-origin:0 50%;">Radius</div>
<div class="t" style="left:711px;top:680.0px;font-size:11.55px;line-height:14px;transform:scaleX(0.9091);transform-origin:0 50%;">Inner</div>
<div class="t" style="left:747px;top:680.0px;font-size:11.55px;line-height:14px;transform:scaleX(0.9091);transform-origin:0 50%;">Outer</div>
<div class="inp" style="left:659px;top:695px;width:19px;height:16px;font-size:11.55px;line-height:12px;text-align:left;"><span style="display:inline-block;transform:scaleX(0.9091);transform-origin:0 50%">5</span></div>
<div class="btn" style="left:681px;top:692px;width:17px;height:12px;"><div style="position:absolute;left:50%;top:50%;margin-left:-3px;margin-top:-2.0px;width:0;height:0;border-left:3px solid transparent;border-right:3px solid transparent;border-bottom:3px solid #000;"></div></div>
<div class="btn" style="left:681px;top:704px;width:17px;height:13px;"><div style="position:absolute;left:50%;top:50%;margin-left:-3px;margin-top:-2.0px;width:0;height:0;border-left:3px solid transparent;border-right:3px solid transparent;border-top:3px solid #000;"></div></div>
<div class="inp" style="left:703px;top:695px;width:19px;height:16px;font-size:11.55px;line-height:12px;text-align:left;"><span style="display:inline-block;transform:scaleX(0.9091);transform-origin:0 50%">6</span></div>
<div class="btn" style="left:724px;top:692px;width:17px;height:12px;"><div style="position:absolute;left:50%;top:50%;margin-left:-3px;margin-top:-2.0px;width:0;height:0;border-left:3px solid transparent;border-right:3px solid transparent;border-bottom:3px solid #000;"></div></div>
<div class="btn" style="left:724px;top:704px;width:17px;height:13px;"><div style="position:absolute;left:50%;top:50%;margin-left:-3px;margin-top:-2.0px;width:0;height:0;border-left:3px solid transparent;border-right:3px solid transparent;border-top:3px solid #000;"></div></div>
<div class="inp" style="left:747px;top:695px;width:19px;height:16px;font-size:11.55px;line-height:12px;text-align:left;"><span style="display:inline-block;transform:scaleX(0.9091);transform-origin:0 50%">20</span></div>
<div class="btn" style="left:768px;top:692px;width:16px;height:12px;"><div style="position:absolute;left:50%;top:50%;margin-left:-3px;margin-top:-2.0px;width:0;height:0;border-left:3px solid transparent;border-right:3px solid transparent;border-bottom:3px solid #000;"></div></div>
<div class="btn" style="left:768px;top:704px;width:16px;height:13px;"><div style="position:absolute;left:50%;top:50%;margin-left:-3px;margin-top:-2.0px;width:0;height:0;border-left:3px solid transparent;border-right:3px solid transparent;border-top:3px solid #000;"></div></div>
<div class="btn" style="left:795px;top:592px;width:113px;height:24px;font-size:11.55px;line-height:21px;"><span style="position:static;display:inline-block;transform:scaleX(0.9091);">Star Image [3D]</span></div>
<div class="btn" style="left:911px;top:592px;width:109px;height:24px;font-size:11.55px;line-height:21px;"><span style="position:static;display:inline-block;transform:scaleX(0.9091);">Update Setting Items</span></div>
<div class="gb" style="left:795px;top:623px;width:160px;height:49px;"></div>
<div class="t gbl" style="left:803px;top:617.5px;font-size:11.55px;line-height:13px;transform:scaleX(0.9091);transform-origin:0 50%;">Measurement / View Option</div>
<div class="btn" style="left:804px;top:629px;width:72px;height:20px;font-size:11.55px;line-height:17px;"><span style="position:static;display:inline-block;transform:scaleX(0.9091);">Show Field</span></div>
<div class="chk" style="left:804px;top:652px;width:9px;height:9px;background:#f0f0f0"></div>
<div class="t" style="left:821px;top:651.5px;font-size:11.55px;line-height:14px;transform:scaleX(0.9091);transform-origin:0 50%;color:#a0a0a0;">Field Measure</div>
<div class="btn" style="left:895px;top:642px;width:16px;height:14px;"><div style="position:absolute;left:50%;top:50%;margin-left:-3px;margin-top:-2.0px;width:0;height:0;border-left:3px solid transparent;border-right:3px solid transparent;border-bottom:3px solid #000;"></div></div>
<div class="btn" style="left:895px;top:656px;width:16px;height:14px;"><div style="position:absolute;left:50%;top:50%;margin-left:-3px;margin-top:-2.0px;width:0;height:0;border-left:3px solid transparent;border-right:3px solid transparent;border-top:3px solid #000;"></div></div>
<div class="t" style="left:912px;top:631.0px;font-size:11.55px;line-height:14px;transform:scaleX(0.9091);transform-origin:0 50%;">Interval</div>
<div class="inp" style="left:912px;top:648px;width:35px;height:19px;font-size:11.55px;line-height:15px;text-align:left;"><span style="display:inline-block;transform:scaleX(0.9091);transform-origin:0 50%">1</span></div>
<div class="btn" style="left:963px;top:622px;width:56px;height:19px;font-size:11.55px;line-height:16px;background:repeating-conic-gradient(#f4f4f4 0 25%,#e8e8e8 0 50%) 0 0/2px 2px"><span style="position:static;display:inline-block;transform:scaleX(0.9091);">DShow</span></div>
<div class="t" style="left:962px;top:640.0px;font-size:11.55px;line-height:14px;transform:scaleX(0.9091);transform-origin:0 50%;">Frame Rate</div>
<div class="inp" style="left:962px;top:653px;width:57px;height:19px;font-size:11.55px;line-height:15px;text-align:left;padding-left:5px"><span style="display:inline-block;transform:scaleX(0.9091);transform-origin:0 50%">6.060357€</span></div>
<div class="gb" style="left:795px;top:681px;width:79px;height:38px;"></div>
<div class="t gbl" style="left:803px;top:675.5px;font-size:11.55px;line-height:13px;transform:scaleX(0.9091);transform-origin:0 50%;">Field Order</div>
<div class="rad" style="left:804px;top:690px;width:10px;height:10px;"></div>
<div class="t" style="left:821px;top:688.0px;font-size:11.55px;line-height:14px;transform:scaleX(0.9091);transform-origin:0 50%;">Even first</div>
<div class="rad" style="left:804px;top:703px;width:10px;height:10px;"><div style="position:absolute;left:3px;top:3px;width:4px;height:4px;border-radius:2px;background:#000"></div></div>
<div class="t" style="left:821px;top:701.5px;font-size:11.55px;line-height:14px;transform:scaleX(0.9091);transform-origin:0 50%;">Odd first</div>
<div class="btn" style="left:875px;top:681px;width:54px;height:39px;font-size:13.20px;line-height:36px;font-weight:bold;outline:1px solid #000"><span style="position:static;display:inline-block;transform:scaleX(0.9091);">Graph</span></div>
<div class="gb" style="left:930px;top:681px;width:89px;height:38px;"></div>
<div class="t gbl" style="left:937px;top:675.5px;font-size:11.55px;line-height:13px;transform:scaleX(0.9091);transform-origin:0 50%;">Current Object</div>
<div class="btn" style="left:933px;top:691px;width:25px;height:21px;font-size:13.20px;line-height:18px;background:repeating-conic-gradient(#f4f4f4 0 25%,#e8e8e8 0 50%) 0 0/2px 2px"><span style="position:static;display:inline-block;transform:scaleX(0.9091);">A</span></div>
<div class="btn" style="left:962px;top:691px;width:25px;height:21px;font-size:13.20px;line-height:18px;"><span style="position:static;display:inline-block;transform:scaleX(0.9091);">B</span></div>
<div class="btn" style="left:990px;top:691px;width:25px;height:21px;font-size:13.20px;line-height:18px;"><span style="position:static;display:inline-block;transform:scaleX(0.9091);">C</span></div>
<div class="" style="left:933px;top:712px;width:27px;height:4px;background:#a8d0f8"></div>
<div class="" style="left:962px;top:712px;width:26px;height:4px;background:#ffff00"></div>
<div class="" style="left:990px;top:712px;width:27px;height:4px;background:#ff00ff"></div>
<div class="" style="left:12px;top:723px;width:1016px;height:2px;border-top:1px solid #a0a0a0;border-bottom:1px solid #fff"></div>
<div class="t" style="left:140px;top:741.3px;font-size:12.76px;line-height:15px;transform:scaleX(0.9091);transform-origin:0 50%;font-weight:bold;">Timing process indicator</div>
<div class="inp" style="left:19px;top:759px;width:80px;height:19px;font-size:12.10px;line-height:15px;text-align:left;background:#00ffff;padding-left:2px;letter-spacing:-0.2px"><span style="display:inline-block;transform:scaleX(0.9091);transform-origin:0 50%">1. Time correct</span></div>
<div class="inp" style="left:99px;top:759px;width:88px;height:19px;font-size:12.10px;line-height:15px;text-align:left;background:#00ffff;padding-left:2px;letter-spacing:-0.2px"><span style="display:inline-block;transform:scaleX(0.9091);transform-origin:0 50%">2. XML element</span></div>
<div class="inp" style="left:187px;top:759px;width:72px;height:19px;font-size:12.10px;line-height:15px;text-align:left;background:#00ffff;padding-left:2px;letter-spacing:-0.2px"><span style="display:inline-block;transform:scaleX(0.9091);transform-origin:0 50%">3. Light curve</span></div>
<div class="inp" style="left:259px;top:759px;width:80px;height:19px;font-size:12.10px;line-height:15px;text-align:left;background:#fff;padding-left:2px;letter-spacing:-0.2px"><span style="display:inline-block;transform:scaleX(0.9091);transform-origin:0 50%">4. Diffraction tit</span></div>
<div class="inp" style="left:339px;top:759px;width:80px;height:19px;font-size:12.10px;line-height:15px;text-align:left;background:#fff;padding-left:2px;letter-spacing:-0.2px"><span style="display:inline-block;transform:scaleX(0.9091);transform-origin:0 50%">5. Make report</span></div>
<div class="t" style="left:434.5px;top:728.5px;font-size:14.30px;line-height:19px;transform:scaleX(1.0000);transform-origin:0 50%;font-weight:bold;">AVI filename :</div>
<div class="inp" style="left:531px;top:728px;width:496px;height:19px;font-size:12.10px;line-height:15px;text-align:left;font-family:'Liberation Mono',monospace;letter-spacing:-1.5px;padding-left:2px"><span style="display:inline-block;transform:scaleX(0.9091);transform-origin:0 50%">I:\A-enpei kansoku\kansoku kiroku2025\20250208@Koon jitaku\20_43_13.avi</span></div>
<div class="" style="left:755px;top:34px;width:273px;height:493px;background:linear-gradient(180deg,#d6d6d6 50%,#e2e2e2 64%,#ebebeb 82%,#f0f0f0 100%)"></div>
<div class="" style="left:1027px;top:34px;width:1px;height:493px;background:#a0a0a0"></div>
<div class="btn" style="left:763px;top:291px;width:147px;height:25px;font-size:14.30px;line-height:22px;"><span style="position:static;display:inline-block;transform:scaleX(0.9091);">Timing Error Simulation</span></div>
<div class="gb" style="left:917px;top:282px;width:104px;height:27px;"></div>
<svg style="position:absolute;left:926px;top:284px" width="84" height="8" viewBox="0 0 84 8"><g stroke="#000" stroke-width="1"><line x1="2.5" y1="2" x2="2.5" y2="7"/><line x1="10.3" y1="2" x2="10.3" y2="7"/><line x1="18.1" y1="2" x2="18.1" y2="7"/><line x1="25.9" y1="2" x2="25.9" y2="7"/><line x1="33.7" y1="2" x2="33.7" y2="7"/><line x1="41.5" y1="2" x2="41.5" y2="7"/><line x1="49.3" y1="2" x2="49.3" y2="7"/><line x1="57.1" y1="2" x2="57.1" y2="7"/><line x1="64.9" y1="2" x2="64.9" y2="7"/><line x1="72.7" y1="2" x2="72.7" y2="7"/><line x1="80.5" y1="2" x2="80.5" y2="7"/></g></svg>
<div class="t" style="left:926px;top:291.8px;font-size:11.55px;line-height:14px;transform:scaleX(0.9091);transform-origin:0 50%;">0</div>
<div class="t" style="left:942px;top:291.8px;font-size:11.55px;line-height:14px;transform:scaleX(0.9091);transform-origin:0 50%;">Delay (Sec)</div>
<div class="t" style="left:1003px;top:291.8px;font-size:11.55px;line-height:14px;transform:scaleX(0.9091);transform-origin:0 50%;">1</div>
<div class="gb" style="left:917px;top:317px;width:104px;height:35px;border-bottom:none;box-shadow:inset 1px 1px 0 #fff"></div>
<div class="t gbl" style="left:924px;top:311.5px;font-size:11.55px;line-height:13px;transform:scaleX(0.9091);transform-origin:0 50%;background:#dcdcdc">Gain</div>
<div class="inp" style="left:926px;top:327px;width:48px;height:19px;font-size:12.10px;line-height:15px;text-align:left;"><span style="display:inline-block;transform:scaleX(0.9091);transform-origin:0 50%">2.2</span></div>
<div class="btn" style="left:974px;top:318px;width:16px;height:12px;"><div style="position:absolute;left:50%;top:50%;margin-left:-3px;margin-top:-2.0px;width:0;height:0;border-left:3px solid transparent;border-right:3px solid transparent;border-bottom:3px solid #000;"></div></div>
<div class="btn" style="left:974px;top:330px;width:16px;height:13px;"><div style="position:absolute;left:50%;top:50%;margin-left:-3px;margin-top:-2.0px;width:0;height:0;border-left:3px solid transparent;border-right:3px solid transparent;border-top:3px solid #000;"></div></div>
<div class="gb" style="left:761px;top:332px;width:148px;height:51px;"></div>
<div class="t gbl" style="left:767px;top:326.5px;font-size:11.55px;line-height:13px;transform:scaleX(0.9091);transform-origin:0 50%;background:#dedede">Gamma Reverse Correction</div>
<div class="rad" style="left:769px;top:345px;width:10px;height:10px;"><div style="position:absolute;left:3px;top:3px;width:4px;height:4px;border-radius:2px;background:#000"></div></div>
<div class="t" style="left:786px;top:342.5px;font-size:11.55px;line-height:14px;transform:scaleX(0.9091);transform-origin:0 50%;">OFF</div>
<div class="rad" style="left:817px;top:345px;width:10px;height:10px;"></div>
<div class="t" style="left:834px;top:342.5px;font-size:11.55px;line-height:14px;transform:scaleX(0.9091);transform-origin:0 50%;">Field</div>
<div class="rad" style="left:769px;top:363px;width:10px;height:10px;"></div>
<div class="t" style="left:786px;top:361.0px;font-size:11.55px;line-height:14px;transform:scaleX(0.9091);transform-origin:0 50%;">Measure</div>
<div class="chk" style="left:840px;top:362px;width:9px;height:9px;background:#fff"></div>
<div class="inp" style="left:867px;top:357px;width:31px;height:19px;font-size:11.55px;line-height:15px;text-align:left;color:#a0a0a0;background:#f0f0f0"><span style="display:inline-block;transform:scaleX(0.9091);transform-origin:0 50%">1.00</span></div>
<div class="gb" style="left:917px;top:355px;width:104px;height:27px;"></div>
<div class="t gbl" style="left:924px;top:349.5px;font-size:11.55px;line-height:13px;transform:scaleX(0.9091);transform-origin:0 50%;background:#e0e0e0">Gaussian Filtre</div>
<div class="rad" style="left:926px;top:364px;width:10px;height:10px;"><div style="position:absolute;left:3px;top:3px;width:4px;height:4px;border-radius:2px;background:#000"></div></div>
<div class="t" style="left:943px;top:362.5px;font-size:11.55px;line-height:14px;transform:scaleX(0.9091);transform-origin:0 50%;">0</div>
<div class="rad" style="left:957px;top:364px;width:10px;height:10px;"></div>
<div class="t" style="left:974px;top:362.5px;font-size:11.55px;line-height:14px;transform:scaleX(0.9091);transform-origin:0 50%;">3</div>
<div class="rad" style="left:988px;top:364px;width:10px;height:10px;"></div>
<div class="t" style="left:1005px;top:362.5px;font-size:11.55px;line-height:14px;transform:scaleX(0.9091);transform-origin:0 50%;">5</div>
<div class="btn" style="left:765px;top:391px;width:143px;height:26px;font-size:12.65px;line-height:23px;font-weight:bold;"><span style="position:static;display:inline-block;transform:scaleX(0.9091);">Asteroid timing guide</span></div>
<div class="btn" style="left:913px;top:391px;width:109px;height:26px;font-size:14.30px;line-height:23px;"><span style="position:static;display:inline-block;transform:scaleX(0.9091);">Operation Guide</span></div>
<div class="btn" style="left:763px;top:422px;width:187px;height:26px;font-size:12.65px;line-height:23px;font-weight:bold;color:#000080;"><span style="position:static;display:inline-block;transform:scaleX(0.9091);">SharpCap Timing Analysis</span></div>
<div class="btn" style="left:961px;top:422px;width:48px;height:24px;font-size:11.55px;line-height:21px;background:repeating-conic-gradient(#f4f4f4 0 25%,#e4e4e4 0 50%) 0 0/2px 2px"><span style="position:static;display:inline-block;transform:scaleX(0.9091);">More</span></div>
<div class="gb" style="left:759px;top:459px;width:264px;height:76px;"></div>
<div class="t gbl" style="left:766px;top:453.5px;font-size:11.55px;line-height:13px;transform:scaleX(0.9091);transform-origin:0 50%;background:#eaeaea">Frame time</div>
<div class="chk" style="left:767px;top:476px;width:9px;height:9px;background:#fff"></div>
<div class="t" style="left:786px;top:474.6px;font-size:12.10px;line-height:14px;transform:scaleX(0.9091);transform-origin:0 50%;font-weight:bold;color:#2a2a40;">Sharp4.1</div>
<div class="t" style="left:831px;top:457.5px;font-size:11.55px;line-height:14px;transform:scaleX(0.9091);transform-origin:0 50%;">Date</div>
<div class="inp" style="left:831px;top:471px;width:71px;height:19px;font-size:12.10px;line-height:15px;text-align:left;"><span style="display:inline-block;transform:scaleX(0.9091);transform-origin:0 50%">25 02 08</span></div>
<div class="t" style="left:904px;top:457.5px;font-size:11.55px;line-height:14px;transform:scaleX(0.9091);transform-origin:0 50%;">Threshold</div>
<div class="inp" style="left:914px;top:471px;width:18px;height:18px;font-size:12.10px;line-height:14px;text-align:left;padding-left:2px"><span style="display:inline-block;transform:scaleX(0.9091);transform-origin:0 50%">80</span></div>
<div class="btn" style="left:937px;top:469px;width:16px;height:12px;"><div style="position:absolute;left:50%;top:50%;margin-left:-3px;margin-top:-2.0px;width:0;height:0;border-left:3px solid transparent;border-right:3px solid transparent;border-bottom:3px solid #000;"></div></div>
<div class="btn" style="left:937px;top:481px;width:16px;height:12px;"><div style="position:absolute;left:50%;top:50%;margin-left:-3px;margin-top:-2.0px;width:0;height:0;border-left:3px solid transparent;border-right:3px solid transparent;border-top:3px solid #000;"></div></div>
<div class="chk" style="left:957px;top:467px;width:9px;height:9px;background:#fff"><svg width="9" height="9" viewBox="0 0 9 9" style="position:absolute;left:1px;top:1px"><path d="M1 3.5 L3.5 6 L8 1.5" stroke="#000" stroke-width="1.9" fill="none" stroke-linecap="square"/></svg></div>
<div class="inp" style="left:970px;top:463px;width:50px;height:19px;font-size:12.10px;line-height:15px;text-align:left;"><span style="display:inline-block;transform:scaleX(0.9091);transform-origin:0 50%">Sharp</span></div>
<div class="btn" style="left:1003px;top:464px;width:17px;height:17px;font-size:11.55px;line-height:14px;"><span style="position:static;display:inline-block;transform:scaleX(0.9091);"></span></div>
<div style="left:1007.5px;top:470px;width:0;height:0;border-left:4px solid transparent;border-right:4px solid transparent;border-top:4px solid #000"></div>
<div class="t" style="left:778px;top:493.9px;font-size:11.55px;line-height:14px;transform:scaleX(0.9091);transform-origin:0 50%;">h</div>
<div class="t" style="left:802px;top:493.9px;font-size:11.55px;line-height:14px;transform:scaleX(0.9091);transform-origin:0 50%;">m</div>
<div class="t" style="left:825px;top:493.9px;font-size:11.55px;line-height:14px;transform:scaleX(0.9091);transform-origin:0 50%;">s [Start]</div>
<div class="t" style="left:893px;top:493.9px;font-size:11.55px;line-height:14px;transform:scaleX(0.9091);transform-origin:0 50%;">[Mid]</div>
<div class="t" style="left:943px;top:493.9px;font-size:11.55px;line-height:14px;transform:scaleX(0.9091);transform-origin:0 50%;">[End]</div>
<div class="t" style="left:977px;top:493.9px;font-size:11.55px;line-height:14px;transform:scaleX(0.9091);transform-origin:0 50%;">S1</div>
<div class="t" style="left:1000px;top:493.9px;font-size:11.55px;line-height:14px;transform:scaleX(0.9091);transform-origin:0 50%;">S2</div>
<div class="inp" style="left:764px;top:509px;width:23px;height:19px;font-size:12.10px;line-height:15px;text-align:left;background:#00ffff;"><span style="display:inline-block;transform:scaleX(0.9091);transform-origin:0 50%">11</span></div>
<div class="inp" style="left:788px;top:509px;width:23px;height:19px;font-size:12.10px;line-height:15px;text-align:left;background:#00ffff;"><span style="display:inline-block;transform:scaleX(0.9091);transform-origin:0 50%">44</span></div>
<div class="inp" style="left:815px;top:509px;width:56px;height:19px;font-size:12.10px;line-height:15px;text-align:left;background:#00ffff;"><span style="display:inline-block;transform:scaleX(0.9091);transform-origin:0 50%"></span></div>
<div class="inp" style="left:876px;top:509px;width:59px;height:19px;font-size:12.10px;line-height:15px;text-align:left;background:#00ffff;"><span style="display:inline-block;transform:scaleX(0.9091);transform-origin:0 50%">42.8129</span></div>
<div class="inp" style="left:939px;top:509px;width:60px;height:19px;font-size:12.10px;line-height:15px;text-align:left;background:#00ffff;"><span style="display:inline-block;transform:scaleX(0.9091);transform-origin:0 50%">42.8954</span></div>
<div class="" style="left:976px;top:492px;width:15px;height:16px;background:#fff"></div>
<div class="" style="left:997px;top:492px;width:18px;height:16px;background:#fff"></div>
<div class="t" style="left:977px;top:494.5px;font-size:11.55px;line-height:14px;transform:scaleX(0.9091);transform-origin:0 50%;">S1</div>
<div class="t" style="left:1000px;top:494.5px;font-size:11.55px;line-height:14px;transform:scaleX(0.9091);transform-origin:0 50%;">S2</div>
<div class="win" style="left:747px;top:9px;width:283px;height:272px;border-radius:8px"></div>
<div class="tb" style="left:747px;top:9px;width:283px;height:25px;"></div>
<svg style="position:absolute;left:750px;top:13px" width="16" height="16" viewBox="0 0 16 16"><rect x="0" y="0.5" width="16" height="15" fill="#000090"/><rect x="0" y="3" width="3" height="4" fill="#0000ff"/><rect x="7" y="3" width="3" height="2" fill="#0000ff"/><rect x="13" y="5" width="3" height="3" fill="#0000ff"/><rect x="12" y="10" width="4" height="5.5" fill="#0000ff"/><rect x="0" y="12" width="3" height="3" fill="#000"/><rect x="3" y="14.5" width="6" height="1.5" fill="#000"/><rect x="1" y="0.5" width="3" height="1.5" fill="#000"/><path d="M4 1 H6 V5.5 L8 7 H16 V9 H8 L6 10.5 V14 H4 V10.5 L2 9 H0 V7 H2 L4 5.5 Z" fill="#ffff00"/><g fill="#fff"><rect x="2" y="3" width="1" height="1"/><rect x="10" y="2" width="1" height="1"/><rect x="12" y="2" width="1" height="1"/><rect x="14" y="3" width="1" height="1"/><rect x="2" y="12" width="1" height="1"/><rect x="3" y="13" width="1" height="1"/><rect x="8" y="13" width="1" height="1"/><rect x="10" y="13" width="1" height="1"/><rect x="12" y="12" width="1" height="1"/><rect x="14" y="13" width="1" height="1"/></g></svg>
<div class="t" style="left:772px;top:13.6px;font-size:13.42px;line-height:16px;transform:scaleX(0.9091);transform-origin:0 50%;color:#8c8c8c;">Operation guide</div>
<div style="left:910px;top:21px;width:10px;height:1px;background:#8c8c8c"></div>
<div style="left:955px;top:16px;width:10px;height:10px;border:1px solid #8c8c8c;border-radius:1px"></div>
<svg style="position:absolute;left:1001px;top:16px" width="10" height="10" viewBox="0 0 10 10"><path d="M0.5 0.5 L9.5 9.5 M9.5 0.5 L0.5 9.5" stroke="#8c8c8c" stroke-width="1"/></svg>
<div class="" style="left:747px;top:34px;width:209px;height:241px;background:#fff"></div>
<svg style="position:absolute;left:747px;top:34px" width="209" height="241" viewBox="747 34 209 241">
<line x1="777" y1="62.5" x2="947" y2="62.5" stroke="#00e000" stroke-width="1.2"/>
<line x1="777" y1="254.5" x2="947" y2="254.5" stroke="#707070" stroke-width="1"/>
<polyline points="777.4,163.5 784.5,164.5 789.6,170.6 798.1,180.3 805.8,194.9 813.9,207 821,215.2 830.2,223.3 838.3,229.4 846.4,234.4 941.7,235.4" fill="none" stroke="#e00000" stroke-width="1"/>
<g fill="none" stroke="#0000ff" stroke-width="0.9">
<circle cx="777.0" cy="158.0" r="1.6"/><circle cx="792.0" cy="165.9" r="1.6"/><circle cx="792.0" cy="173.0" r="1.6"/><circle cx="798.1" cy="174.0" r="1.6"/><circle cx="792.0" cy="178.0" r="1.6"/><circle cx="792.0" cy="183.1" r="1.6"/><circle cx="798.1" cy="190.4" r="1.6"/><circle cx="807.2" cy="190.8" r="1.6"/><circle cx="810.9" cy="192.9" r="1.6"/><circle cx="810.9" cy="195.9" r="1.6"/><circle cx="807.2" cy="198.9" r="1.6"/><circle cx="807.2" cy="204.0" r="1.6"/><circle cx="810.9" cy="206.6" r="1.6"/><circle cx="807.2" cy="211.1" r="1.6"/><circle cx="810.9" cy="212.1" r="1.6"/><circle cx="810.9" cy="215.6" r="1.6"/><circle cx="819.0" cy="207.7" r="1.6"/><circle cx="819.0" cy="214.1" r="1.6"/><circle cx="822.0" cy="213.0" r="1.6"/><circle cx="824.0" cy="214.0" r="1.6"/><circle cx="819.0" cy="217.6" r="1.6"/><circle cx="823.7" cy="217.6" r="1.6"/><circle cx="819.0" cy="223.7" r="1.6"/><circle cx="822.0" cy="229.0" r="1.6"/><circle cx="824.0" cy="228.3" r="1.6"/><circle cx="831.0" cy="220.8" r="1.6"/><circle cx="831.0" cy="225.7" r="1.6"/><circle cx="831.0" cy="233.8" r="1.6"/><circle cx="837.9" cy="223.7" r="1.6"/><circle cx="839.3" cy="225.3" r="1.6"/><circle cx="837.9" cy="229.0" r="1.6"/><circle cx="840.3" cy="230.4" r="1.6"/><circle cx="844.0" cy="226.3" r="1.6"/><circle cx="844.0" cy="229.4" r="1.6"/><circle cx="844.0" cy="233.8" r="1.6"/><circle cx="852.0" cy="221.6" r="1.6"/><circle cx="852.0" cy="224.9" r="1.6"/><circle cx="852.0" cy="228.3" r="1.6"/><circle cx="852.0" cy="231.4" r="1.6"/><circle cx="852.0" cy="235.4" r="1.6"/><circle cx="858.1" cy="225.7" r="1.6"/><circle cx="858.1" cy="230.4" r="1.6"/><circle cx="858.1" cy="235.0" r="1.6"/><circle cx="863.6" cy="228.3" r="1.6"/><circle cx="863.6" cy="232.4" r="1.6"/><circle cx="863.6" cy="237.5" r="1.6"/><circle cx="867.7" cy="220.8" r="1.6"/><circle cx="867.7" cy="224.9" r="1.6"/><circle cx="869.7" cy="229.4" r="1.6"/><circle cx="869.7" cy="233.4" r="1.6"/><circle cx="872.7" cy="226.3" r="1.6"/><circle cx="872.7" cy="231.4" r="1.6"/><circle cx="872.7" cy="237.5" r="1.6"/><circle cx="877.8" cy="229.4" r="1.6"/><circle cx="877.8" cy="237.5" r="1.6"/><circle cx="881.9" cy="225.7" r="1.6"/><circle cx="881.9" cy="233.4" r="1.6"/><circle cx="798.1" cy="190.9" r="1.6"/></g></svg>
<div class="gb" style="left:960px;top:226px;width:68px;height:50px;"></div>
<div class="t gbl" style="left:966px;top:220.5px;font-size:13.20px;line-height:13px;transform:scaleX(0.9091);transform-origin:0 50%;">Control</div>
<div class="rad" style="left:968px;top:239px;width:10px;height:10px;"><div style="position:absolute;left:3px;top:3px;width:4px;height:4px;border-radius:2px;background:#000"></div></div>
<div class="t" style="left:985px;top:236.0px;font-size:13.75px;line-height:16px;transform:scaleX(0.9091);transform-origin:0 50%;">Hide</div>
<div class="rad" style="left:968px;top:257px;width:10px;height:10px;"></div>
<div class="t" style="left:985px;top:255.0px;font-size:13.75px;line-height:16px;transform:scaleX(0.9091);transform-origin:0 50%;">Show</div>
<div class="win" style="left:1044px;top:8px;width:753px;height:712px;"></div>
<div class="tb" style="left:1044px;top:8px;width:753px;height:26px;"></div>
<svg style="position:absolute;left:1046px;top:12px" width="16" height="16" viewBox="0 0 16 16"><rect x="0" y="0.5" width="16" height="15" fill="#000090"/><rect x="0" y="3" width="3" height="4" fill="#0000ff"/><rect x="7" y="3" width="3" height="2" fill="#0000ff"/><rect x="13" y="5" width="3" height="3" fill="#0000ff"/><rect x="12" y="10" width="4" height="5.5" fill="#0000ff"/><rect x="0" y="12" width="3" height="3" fill="#000"/><rect x="3" y="14.5" width="6" height="1.5" fill="#000"/><rect x="1" y="0.5" width="3" height="1.5" fill="#000"/><path d="M4 1 H6 V5.5 L8 7 H16 V9 H8 L6 10.5 V14 H4 V10.5 L2 9 H0 V7 H2 L4 5.5 Z" fill="#ffff00"/><g fill="#fff"><rect x="2" y="3" width="1" height="1"/><rect x="10" y="2" width="1" height="1"/><rect x="12" y="2" width="1" height="1"/><rect x="14" y="3" width="1" height="1"/><rect x="2" y="12" width="1" height="1"/><rect x="3" y="13" width="1" height="1"/><rect x="8" y="13" width="1" height="1"/><rect x="10" y="13" width="1" height="1"/><rect x="12" y="12" width="1" height="1"/><rect x="14" y="13" width="1" height="1"/></g></svg>
<div class="t" style="left:1068px;top:13.5px;font-size:12.98px;line-height:15px;transform:scaleX(0.9091);transform-origin:0 50%;color:#222;">Graph</div>
<div style="left:1678px;top:20px;width:10px;height:1px;background:#222"></div>
<div style="left:1723px;top:15px;width:10px;height:10px;border:1px solid #222;border-radius:1px"></div>
<svg style="position:absolute;left:1769px;top:15px" width="10" height="10" viewBox="0 0 10 10"><path d="M0.5 0.5 L9.5 9.5 M9.5 0.5 L0.5 9.5" stroke="#222" stroke-width="1"/></svg>
<div class="" style="left:1051px;top:35px;width:740px;height:425px;background:#fff"></div>
<div class="" style="left:1044px;top:465px;width:753px;height:1px;background:#fff"></div>
<svg style="position:absolute;left:1051px;top:35px" width="740" height="425" viewBox="1051 35 740 425"><line x1="1101" y1="188.5" x2="1781" y2="188.5" stroke="#00e8f0" stroke-width="1.2"/><line x1="1101" y1="300.5" x2="1781" y2="300.5" stroke="#00e8f0" stroke-width="1.2"/><line x1="1101" y1="411.5" x2="1781" y2="411.5" stroke="#000" stroke-width="1"/><line x1="1101.5" y1="55" x2="1101.5" y2="421" stroke="#000" stroke-width="1.2"/><line x1="1101" y1="420.5" x2="1781" y2="420.5" stroke="#000" stroke-width="1.2"/><line x1="1117.5" y1="421" x2="1117.5" y2="425" stroke="#000" stroke-width="1"/><line x1="1197.5" y1="421" x2="1197.5" y2="425" stroke="#000" stroke-width="1"/><line x1="1277.5" y1="421" x2="1277.5" y2="425" stroke="#000" stroke-width="1"/><line x1="1357.5" y1="421" x2="1357.5" y2="425" stroke="#000" stroke-width="1"/><line x1="1437.5" y1="421" x2="1437.5" y2="425" stroke="#000" stroke-width="1"/><line x1="1517.5" y1="421" x2="1517.5" y2="425" stroke="#000" stroke-width="1"/><line x1="1597.5" y1="421" x2="1597.5" y2="425" stroke="#000" stroke-width="1"/><line x1="1677.5" y1="421" x2="1677.5" y2="425" stroke="#000" stroke-width="1"/><line x1="1757.5" y1="421" x2="1757.5" y2="425" stroke="#000" stroke-width="1"/><polyline points="1100.7,410.5 1108.7,410.8 1116.7,410.8 1124.7,410.5 1132.7,410.8 1140.7,410.8 1148.7,410.8 1156.7,411.1 1164.7,410.8 1172.8,410.2 1180.8,410.8 1188.8,410.2 1196.8,411.4 1204.8,410.8 1212.8,410.8 1220.8,410.8 1228.8,410.5 1236.8,410.5 1244.8,411.1 1252.8,410.8 1260.8,410.8 1268.8,411.4 1276.8,410.8 1284.8,410.8 1292.8,410.8 1300.9,411.1 1308.9,411.4 1316.9,410.5 1324.9,410.5 1332.9,411.1 1340.9,410.5 1348.9,411.4 1356.9,410.8 1364.9,410.8 1372.9,411.1 1380.9,410.2 1388.9,411.1 1396.9,411.4 1404.9,410.2 1412.9,410.5 1420.9,411.4 1428.9,410.8 1437.0,410.2 1445.0,410.8 1453.0,411.4 1461.0,410.2 1469.0,411.4 1477.0,411.4 1485.0,410.8 1493.0,410.8 1501.0,410.8 1509.0,411.1 1517.0,410.8 1525.0,411.1 1533.0,411.4 1541.0,410.8 1549.0,410.8 1557.0,411.1 1565.0,411.4 1573.1,410.8 1581.1,410.8 1589.1,410.5 1597.1,410.8 1605.1,410.2 1613.1,410.2 1621.1,410.5 1629.1,410.8 1637.1,410.5 1645.1,410.8 1653.1,411.1 1661.1,410.8 1669.1,411.4 1677.1,411.1 1685.1,411.4 1693.1,410.8 1701.2,410.8 1709.2,410.8 1717.2,411.4 1725.2,410.8 1733.2,410.8 1741.2,410.8 1749.2,410.8 1757.2,410.8 1765.2,410.8 1773.2,410.8" fill="none" stroke="#ff60ff" stroke-width="1"/><polyline points="1100.7,320.8 1108.7,297.8 1116.7,332.9 1124.7,326.0 1132.7,294.7 1140.7,313.9 1148.7,304.9 1156.7,302.0 1164.7,295.8 1172.8,317.6 1180.8,343.1 1188.8,290.8 1196.8,329.9 1204.8,289.9 1212.8,302.8 1220.8,293.8 1228.8,298.9 1236.8,313.9 1244.8,315.8 1252.8,287.8 1260.8,326.0 1268.8,319.7 1276.8,308.9 1284.8,301.0 1292.8,301.8 1300.9,326.0 1308.9,321.8 1316.9,312.8 1324.9,304.9 1332.9,282.6 1340.9,305.8 1348.9,331.9 1356.9,315.8 1364.9,305.8 1372.9,310.0 1380.9,300.0 1388.9,320.8 1396.9,309.7 1404.9,331.9 1412.9,326.0 1420.9,313.9 1428.9,319.0 1437.0,326.0 1445.0,314.9 1453.0,288.9 1461.0,317.6 1469.0,317.6 1477.0,307.9 1485.0,286.8 1493.0,331.9 1501.0,296.8 1509.0,307.9 1517.0,328.0 1525.0,337.9 1533.0,309.7 1541.0,325.0 1549.0,300.9 1557.0,327.6 1565.0,305.9 1573.1,322.1 1581.1,303.8 1589.1,314.9 1597.1,322.1 1605.1,308.8 1613.1,305.9 1621.1,296.8 1629.1,325.0 1637.1,327.9 1645.1,339.7 1653.1,307.7 1661.1,322.8 1669.1,304.8 1677.1,328.9 1685.1,328.9 1693.1,330.8 1701.2,319.9 1709.2,291.8 1717.2,314.9 1725.2,299.7 1733.2,300.9 1741.2,307.7 1749.2,299.7 1757.2,304.8 1765.2,299.7 1773.2,325.0" fill="none" stroke="#ffff00" stroke-width="1.1"/><polyline points="1100.7,179.8 1108.7,141.8 1116.7,147.9 1124.7,212.8 1132.7,167.9 1140.7,149.9 1148.7,140.8 1156.7,124.0 1164.7,146.9 1172.8,109.8 1180.8,125.8 1188.8,203.9 1196.8,147.9 1204.8,154.7 1212.8,149.9 1220.8,152.7 1228.8,136.0 1236.8,107.0 1244.8,117.0 1252.8,167.9 1260.8,186.9 1268.8,87.0 1276.8,156.7 1284.8,122.0 1292.8,174.7 1300.9,129.9 1308.9,118.7 1316.9,121.0 1324.9,109.1 1332.9,124.8 1340.9,124.8 1348.9,147.9 1356.9,198.8 1364.9,152.7 1372.9,146.9 1380.9,215.8 1388.9,228.0 1396.9,413.0 1404.9,418.8 1412.9,392.9 1420.9,400.9 1428.9,416.6 1437.0,398.0 1445.0,406.8 1453.0,419.9 1461.0,148.9 1469.0,176.8 1477.0,110.9 1485.0,132.9 1493.0,143.8 1501.0,175.8 1509.0,149.9 1517.0,160.8 1525.0,174.7 1533.0,131.6 1541.0,179.8 1549.0,166.0 1557.0,176.7 1565.0,188.9 1573.1,159.7 1581.1,159.7 1589.1,137.7 1597.1,183.8 1605.1,159.0 1613.1,170.9 1621.1,152.6 1629.1,192.7 1637.1,164.8 1645.1,133.6 1653.1,127.8 1661.1,112.6 1669.1,189.6 1677.1,189.6 1685.1,215.0 1693.1,168.6 1701.2,170.9 1709.2,169.6 1717.2,122.7 1725.2,201.8 1733.2,166.8 1741.2,200.8 1749.2,177.7 1757.2,186.8 1765.2,194.0 1773.2,156.9" fill="none" stroke="#8080ff" stroke-width="1.1"/><path d="M1100.7 407.3L1103.9 410.5L1100.7 413.7L1097.5 410.5Z" fill="#ff00ff"/><path d="M1108.7 407.6L1111.9 410.8L1108.7 414.0L1105.5 410.8Z" fill="#ff00ff"/><path d="M1116.7 407.6L1119.9 410.8L1116.7 414.0L1113.5 410.8Z" fill="#ff00ff"/><path d="M1124.7 407.3L1127.9 410.5L1124.7 413.7L1121.5 410.5Z" fill="#ff00ff"/><path d="M1132.7 407.6L1135.9 410.8L1132.7 414.0L1129.5 410.8Z" fill="#ff00ff"/><path d="M1140.7 407.6L1143.9 410.8L1140.7 414.0L1137.5 410.8Z" fill="#ff00ff"/><path d="M1148.7 407.6L1151.9 410.8L1148.7 414.0L1145.5 410.8Z" fill="#ff00ff"/><path d="M1156.7 407.9L1159.9 411.1L1156.7 414.3L1153.5 411.1Z" fill="#ff00ff"/><path d="M1164.7 407.6L1167.9 410.8L1164.7 414.0L1161.5 410.8Z" fill="#ff00ff"/><path d="M1172.8 407.0L1176.0 410.2L1172.8 413.4L1169.6 410.2Z" fill="#ff00ff"/><path d="M1180.8 407.6L1184.0 410.8L1180.8 414.0L1177.6 410.8Z" fill="#ff00ff"/><path d="M1188.8 407.0L1192.0 410.2L1188.8 413.4L1185.6 410.2Z" fill="#ff00ff"/><path d="M1196.8 408.2L1200.0 411.4L1196.8 414.6L1193.6 411.4Z" fill="#ff00ff"/><path d="M1204.8 407.6L1208.0 410.8L1204.8 414.0L1201.6 410.8Z" fill="#ff00ff"/><path d="M1212.8 407.6L1216.0 410.8L1212.8 414.0L1209.6 410.8Z" fill="#ff00ff"/><path d="M1220.8 407.6L1224.0 410.8L1220.8 414.0L1217.6 410.8Z" fill="#ff00ff"/><path d="M1228.8 407.3L1232.0 410.5L1228.8 413.7L1225.6 410.5Z" fill="#ff00ff"/><path d="M1236.8 407.3L1240.0 410.5L1236.8 413.7L1233.6 410.5Z" fill="#ff00ff"/><path d="M1244.8 407.9L1248.0 411.1L1244.8 414.3L1241.6 411.1Z" fill="#ff00ff"/><path d="M1252.8 407.6L1256.0 410.8L1252.8 414.0L1249.6 410.8Z" fill="#ff00ff"/><path d="M1260.8 407.6L1264.0 410.8L1260.8 414.0L1257.6 410.8Z" fill="#ff00ff"/><path d="M1268.8 408.2L1272.0 411.4L1268.8 414.6L1265.6 411.4Z" fill="#ff00ff"/><path d="M1276.8 407.6L1280.0 410.8L1276.8 414.0L1273.6 410.8Z" fill="#ff00ff"/><path d="M1284.8 407.6L1288.0 410.8L1284.8 414.0L1281.6 410.8Z" fill="#ff00ff"/><path d="M1292.8 407.6L1296.0 410.8L1292.8 414.0L1289.6 410.8Z" fill="#ff00ff"/><path d="M1300.9 407.9L1304.1 411.1L1300.9 414.3L1297.7 411.1Z" fill="#ff00ff"/><path d="M1308.9 408.2L1312.1 411.4L1308.9 414.6L1305.7 411.4Z" fill="#ff00ff"/><path d="M1316.9 407.3L1320.1 410.5L1316.9 413.7L1313.7 410.5Z" fill="#ff00ff"/><path d="M1324.9 407.3L1328.1 410.5L1324.9 413.7L1321.7 410.5Z" fill="#ff00ff"/><path d="M1332.9 407.9L1336.1 411.1L1332.9 414.3L1329.7 411.1Z" fill="#ff00ff"/><path d="M1340.9 407.3L1344.1 410.5L1340.9 413.7L1337.7 410.5Z" fill="#ff00ff"/><path d="M1348.9 408.2L1352.1 411.4L1348.9 414.6L1345.7 411.4Z" fill="#ff00ff"/><path d="M1356.9 407.6L1360.1 410.8L1356.9 414.0L1353.7 410.8Z" fill="#ff00ff"/><path d="M1364.9 407.6L1368.1 410.8L1364.9 414.0L1361.7 410.8Z" fill="#ff00ff"/><path d="M1372.9 407.9L1376.1 411.1L1372.9 414.3L1369.7 411.1Z" fill="#ff00ff"/><path d="M1380.9 407.0L1384.1 410.2L1380.9 413.4L1377.7 410.2Z" fill="#ff00ff"/><path d="M1388.9 407.9L1392.1 411.1L1388.9 414.3L1385.7 411.1Z" fill="#ff0000"/><path d="M1396.9 408.2L1400.1 411.4L1396.9 414.6L1393.7 411.4Z" fill="#ff00ff"/><path d="M1404.9 407.0L1408.1 410.2L1404.9 413.4L1401.7 410.2Z" fill="#ff00ff"/><path d="M1412.9 407.3L1416.1 410.5L1412.9 413.7L1409.7 410.5Z" fill="#ff00ff"/><path d="M1420.9 408.2L1424.1 411.4L1420.9 414.6L1417.7 411.4Z" fill="#ff00ff"/><path d="M1428.9 407.6L1432.1 410.8L1428.9 414.0L1425.7 410.8Z" fill="#ff00ff"/><path d="M1437.0 407.0L1440.2 410.2L1437.0 413.4L1433.8 410.2Z" fill="#ff00ff"/><path d="M1445.0 407.6L1448.2 410.8L1445.0 414.0L1441.8 410.8Z" fill="#ff00ff"/><path d="M1453.0 408.2L1456.2 411.4L1453.0 414.6L1449.8 411.4Z" fill="#ff00ff"/><path d="M1461.0 407.0L1464.2 410.2L1461.0 413.4L1457.8 410.2Z" fill="#ff00ff"/><path d="M1469.0 408.2L1472.2 411.4L1469.0 414.6L1465.8 411.4Z" fill="#ff00ff"/><path d="M1477.0 408.2L1480.2 411.4L1477.0 414.6L1473.8 411.4Z" fill="#ff00ff"/><path d="M1485.0 407.6L1488.2 410.8L1485.0 414.0L1481.8 410.8Z" fill="#ff00ff"/><path d="M1493.0 407.6L1496.2 410.8L1493.0 414.0L1489.8 410.8Z" fill="#ff00ff"/><path d="M1501.0 407.6L1504.2 410.8L1501.0 414.0L1497.8 410.8Z" fill="#ff00ff"/><path d="M1509.0 407.9L1512.2 411.1L1509.0 414.3L1505.8 411.1Z" fill="#ff00ff"/><path d="M1517.0 407.6L1520.2 410.8L1517.0 414.0L1513.8 410.8Z" fill="#ff00ff"/><path d="M1525.0 407.9L1528.2 411.1L1525.0 414.3L1521.8 411.1Z" fill="#ff00ff"/><path d="M1533.0 408.2L1536.2 411.4L1533.0 414.6L1529.8 411.4Z" fill="#ff00ff"/><path d="M1541.0 407.6L1544.2 410.8L1541.0 414.0L1537.8 410.8Z" fill="#ff00ff"/><path d="M1549.0 407.6L1552.2 410.8L1549.0 414.0L1545.8 410.8Z" fill="#ff00ff"/><path d="M1557.0 407.9L1560.2 411.1L1557.0 414.3L1553.8 411.1Z" fill="#ff00ff"/><path d="M1565.0 408.2L1568.2 411.4L1565.0 414.6L1561.8 411.4Z" fill="#ff00ff"/><path d="M1573.1 407.6L1576.3 410.8L1573.1 414.0L1569.9 410.8Z" fill="#ff00ff"/><path d="M1581.1 407.6L1584.3 410.8L1581.1 414.0L1577.9 410.8Z" fill="#ff00ff"/><path d="M1589.1 407.3L1592.3 410.5L1589.1 413.7L1585.9 410.5Z" fill="#ff00ff"/><path d="M1597.1 407.6L1600.3 410.8L1597.1 414.0L1593.9 410.8Z" fill="#ff00ff"/><path d="M1605.1 407.0L1608.3 410.2L1605.1 413.4L1601.9 410.2Z" fill="#ff00ff"/><path d="M1613.1 407.0L1616.3 410.2L1613.1 413.4L1609.9 410.2Z" fill="#ff00ff"/><path d="M1621.1 407.3L1624.3 410.5L1621.1 413.7L1617.9 410.5Z" fill="#ff00ff"/><path d="M1629.1 407.6L1632.3 410.8L1629.1 414.0L1625.9 410.8Z" fill="#ff00ff"/><path d="M1637.1 407.3L1640.3 410.5L1637.1 413.7L1633.9 410.5Z" fill="#ff00ff"/><path d="M1645.1 407.6L1648.3 410.8L1645.1 414.0L1641.9 410.8Z" fill="#ff00ff"/><path d="M1653.1 407.9L1656.3 411.1L1653.1 414.3L1649.9 411.1Z" fill="#ff00ff"/><path d="M1661.1 407.6L1664.3 410.8L1661.1 414.0L1657.9 410.8Z" fill="#ff00ff"/><path d="M1669.1 408.2L1672.3 411.4L1669.1 414.6L1665.9 411.4Z" fill="#ff00ff"/><path d="M1677.1 407.9L1680.3 411.1L1677.1 414.3L1673.9 411.1Z" fill="#ff00ff"/><path d="M1685.1 408.2L1688.3 411.4L1685.1 414.6L1681.9 411.4Z" fill="#ff00ff"/><path d="M1693.1 407.6L1696.3 410.8L1693.1 414.0L1689.9 410.8Z" fill="#ff00ff"/><path d="M1701.2 407.6L1704.4 410.8L1701.2 414.0L1698.0 410.8Z" fill="#ff00ff"/><path d="M1709.2 407.6L1712.4 410.8L1709.2 414.0L1706.0 410.8Z" fill="#ff00ff"/><path d="M1717.2 408.2L1720.4 411.4L1717.2 414.6L1714.0 411.4Z" fill="#ff00ff"/><path d="M1725.2 407.6L1728.4 410.8L1725.2 414.0L1722.0 410.8Z" fill="#ff00ff"/><path d="M1733.2 407.6L1736.4 410.8L1733.2 414.0L1730.0 410.8Z" fill="#ff00ff"/><path d="M1741.2 407.6L1744.4 410.8L1741.2 414.0L1738.0 410.8Z" fill="#ff00ff"/><path d="M1749.2 407.6L1752.4 410.8L1749.2 414.0L1746.0 410.8Z" fill="#ff00ff"/><path d="M1757.2 407.6L1760.4 410.8L1757.2 414.0L1754.0 410.8Z" fill="#ff00ff"/><path d="M1765.2 407.6L1768.4 410.8L1765.2 414.0L1762.0 410.8Z" fill="#ff00ff"/><path d="M1773.2 407.6L1776.4 410.8L1773.2 414.0L1770.0 410.8Z" fill="#ff00ff"/><path d="M1100.7 317.6L1103.9 320.8L1100.7 324.0L1097.5 320.8Z" fill="#ffa000"/><path d="M1108.7 294.6L1111.9 297.8L1108.7 301.0L1105.5 297.8Z" fill="#ffa000"/><path d="M1116.7 329.7L1119.9 332.9L1116.7 336.1L1113.5 332.9Z" fill="#ffa000"/><path d="M1124.7 322.8L1127.9 326.0L1124.7 329.2L1121.5 326.0Z" fill="#ffa000"/><path d="M1132.7 291.5L1135.9 294.7L1132.7 297.9L1129.5 294.7Z" fill="#ffa000"/><path d="M1140.7 310.7L1143.9 313.9L1140.7 317.1L1137.5 313.9Z" fill="#ffa000"/><path d="M1148.7 301.7L1151.9 304.9L1148.7 308.1L1145.5 304.9Z" fill="#ffa000"/><path d="M1156.7 298.8L1159.9 302.0L1156.7 305.2L1153.5 302.0Z" fill="#ffa000"/><path d="M1164.7 292.6L1167.9 295.8L1164.7 299.0L1161.5 295.8Z" fill="#ffa000"/><path d="M1172.8 314.4L1176.0 317.6L1172.8 320.8L1169.6 317.6Z" fill="#ffa000"/><path d="M1180.8 339.9L1184.0 343.1L1180.8 346.3L1177.6 343.1Z" fill="#ffa000"/><path d="M1188.8 287.6L1192.0 290.8L1188.8 294.0L1185.6 290.8Z" fill="#ffa000"/><path d="M1196.8 326.7L1200.0 329.9L1196.8 333.1L1193.6 329.9Z" fill="#ffa000"/><path d="M1204.8 286.7L1208.0 289.9L1204.8 293.1L1201.6 289.9Z" fill="#ffa000"/><path d="M1212.8 299.6L1216.0 302.8L1212.8 306.0L1209.6 302.8Z" fill="#ffa000"/><path d="M1220.8 290.6L1224.0 293.8L1220.8 296.9L1217.6 293.8Z" fill="#ffa000"/><path d="M1228.8 295.7L1232.0 298.9L1228.8 302.1L1225.6 298.9Z" fill="#ffa000"/><path d="M1236.8 310.7L1240.0 313.9L1236.8 317.1L1233.6 313.9Z" fill="#ffa000"/><path d="M1244.8 312.6L1248.0 315.8L1244.8 319.0L1241.6 315.8Z" fill="#ffa000"/><path d="M1252.8 284.6L1256.0 287.8L1252.8 291.0L1249.6 287.8Z" fill="#ffa000"/><path d="M1260.8 322.8L1264.0 326.0L1260.8 329.2L1257.6 326.0Z" fill="#ffa000"/><path d="M1268.8 316.5L1272.0 319.7L1268.8 322.9L1265.6 319.7Z" fill="#ffa000"/><path d="M1276.8 305.7L1280.0 308.9L1276.8 312.1L1273.6 308.9Z" fill="#ffa000"/><path d="M1284.8 297.8L1288.0 301.0L1284.8 304.2L1281.6 301.0Z" fill="#ffa000"/><path d="M1292.8 298.6L1296.0 301.8L1292.8 305.0L1289.6 301.8Z" fill="#ffa000"/><path d="M1300.9 322.8L1304.1 326.0L1300.9 329.2L1297.7 326.0Z" fill="#ffa000"/><path d="M1308.9 318.6L1312.1 321.8L1308.9 325.0L1305.7 321.8Z" fill="#ffa000"/><path d="M1316.9 309.6L1320.1 312.8L1316.9 316.0L1313.7 312.8Z" fill="#ffa000"/><path d="M1324.9 301.7L1328.1 304.9L1324.9 308.1L1321.7 304.9Z" fill="#ffa000"/><path d="M1332.9 279.4L1336.1 282.6L1332.9 285.8L1329.7 282.6Z" fill="#ffa000"/><path d="M1340.9 302.6L1344.1 305.8L1340.9 309.0L1337.7 305.8Z" fill="#ffa000"/><path d="M1348.9 328.7L1352.1 331.9L1348.9 335.1L1345.7 331.9Z" fill="#ffa000"/><path d="M1356.9 312.6L1360.1 315.8L1356.9 319.0L1353.7 315.8Z" fill="#ffa000"/><path d="M1364.9 302.6L1368.1 305.8L1364.9 309.0L1361.7 305.8Z" fill="#ffa000"/><path d="M1372.9 306.8L1376.1 310.0L1372.9 313.2L1369.7 310.0Z" fill="#ffa000"/><path d="M1380.9 296.8L1384.1 300.0L1380.9 303.2L1377.7 300.0Z" fill="#ffa000"/><path d="M1388.9 317.6L1392.1 320.8L1388.9 324.0L1385.7 320.8Z" fill="#ff0000"/><path d="M1396.9 306.5L1400.1 309.7L1396.9 312.9L1393.7 309.7Z" fill="#ffa000"/><path d="M1404.9 328.7L1408.1 331.9L1404.9 335.1L1401.7 331.9Z" fill="#ffa000"/><path d="M1412.9 322.8L1416.1 326.0L1412.9 329.2L1409.7 326.0Z" fill="#ffa000"/><path d="M1420.9 310.7L1424.1 313.9L1420.9 317.1L1417.7 313.9Z" fill="#ffa000"/><path d="M1428.9 315.8L1432.1 319.0L1428.9 322.2L1425.7 319.0Z" fill="#ffa000"/><path d="M1437.0 322.8L1440.2 326.0L1437.0 329.2L1433.8 326.0Z" fill="#ffa000"/><path d="M1445.0 311.7L1448.2 314.9L1445.0 318.1L1441.8 314.9Z" fill="#ffa000"/><path d="M1453.0 285.7L1456.2 288.9L1453.0 292.1L1449.8 288.9Z" fill="#ffa000"/><path d="M1461.0 314.4L1464.2 317.6L1461.0 320.8L1457.8 317.6Z" fill="#ffa000"/><path d="M1469.0 314.4L1472.2 317.6L1469.0 320.8L1465.8 317.6Z" fill="#ffa000"/><path d="M1477.0 304.7L1480.2 307.9L1477.0 311.1L1473.8 307.9Z" fill="#ffa000"/><path d="M1485.0 283.6L1488.2 286.8L1485.0 290.0L1481.8 286.8Z" fill="#ffa000"/><path d="M1493.0 328.7L1496.2 331.9L1493.0 335.1L1489.8 331.9Z" fill="#ffa000"/><path d="M1501.0 293.6L1504.2 296.8L1501.0 300.0L1497.8 296.8Z" fill="#ffa000"/><path d="M1509.0 304.7L1512.2 307.9L1509.0 311.1L1505.8 307.9Z" fill="#ffa000"/><path d="M1517.0 324.8L1520.2 328.0L1517.0 331.2L1513.8 328.0Z" fill="#ffa000"/><path d="M1525.0 334.7L1528.2 337.9L1525.0 341.1L1521.8 337.9Z" fill="#ffa000"/><path d="M1533.0 306.5L1536.2 309.7L1533.0 312.9L1529.8 309.7Z" fill="#ffa000"/><path d="M1541.0 321.8L1544.2 325.0L1541.0 328.2L1537.8 325.0Z" fill="#ffa000"/><path d="M1549.0 297.7L1552.2 300.9L1549.0 304.1L1545.8 300.9Z" fill="#ffa000"/><path d="M1557.0 324.4L1560.2 327.6L1557.0 330.8L1553.8 327.6Z" fill="#ffa000"/><path d="M1565.0 302.7L1568.2 305.9L1565.0 309.1L1561.8 305.9Z" fill="#ffa000"/><path d="M1573.1 318.9L1576.3 322.1L1573.1 325.3L1569.9 322.1Z" fill="#ffa000"/><path d="M1581.1 300.6L1584.3 303.8L1581.1 307.0L1577.9 303.8Z" fill="#ffa000"/><path d="M1589.1 311.7L1592.3 314.9L1589.1 318.1L1585.9 314.9Z" fill="#ffa000"/><path d="M1597.1 318.9L1600.3 322.1L1597.1 325.3L1593.9 322.1Z" fill="#ffa000"/><path d="M1605.1 305.6L1608.3 308.8L1605.1 312.0L1601.9 308.8Z" fill="#ffa000"/><path d="M1613.1 302.7L1616.3 305.9L1613.1 309.1L1609.9 305.9Z" fill="#ffa000"/><path d="M1621.1 293.6L1624.3 296.8L1621.1 300.0L1617.9 296.8Z" fill="#ffa000"/><path d="M1629.1 321.8L1632.3 325.0L1629.1 328.2L1625.9 325.0Z" fill="#ffa000"/><path d="M1637.1 324.7L1640.3 327.9L1637.1 331.1L1633.9 327.9Z" fill="#ffa000"/><path d="M1645.1 336.5L1648.3 339.7L1645.1 342.9L1641.9 339.7Z" fill="#ffa000"/><path d="M1653.1 304.5L1656.3 307.7L1653.1 310.9L1649.9 307.7Z" fill="#ffa000"/><path d="M1661.1 319.6L1664.3 322.8L1661.1 326.0L1657.9 322.8Z" fill="#ffa000"/><path d="M1669.1 301.6L1672.3 304.8L1669.1 308.0L1665.9 304.8Z" fill="#ffa000"/><path d="M1677.1 325.7L1680.3 328.9L1677.1 332.1L1673.9 328.9Z" fill="#ffa000"/><path d="M1685.1 325.7L1688.3 328.9L1685.1 332.1L1681.9 328.9Z" fill="#ffa000"/><path d="M1693.1 327.6L1696.3 330.8L1693.1 334.0L1689.9 330.8Z" fill="#ffa000"/><path d="M1701.2 316.7L1704.4 319.9L1701.2 323.1L1698.0 319.9Z" fill="#ffa000"/><path d="M1709.2 288.6L1712.4 291.8L1709.2 295.0L1706.0 291.8Z" fill="#ffa000"/><path d="M1717.2 311.7L1720.4 314.9L1717.2 318.1L1714.0 314.9Z" fill="#ffa000"/><path d="M1725.2 296.5L1728.4 299.7L1725.2 302.9L1722.0 299.7Z" fill="#ffa000"/><path d="M1733.2 297.7L1736.4 300.9L1733.2 304.1L1730.0 300.9Z" fill="#ffa000"/><path d="M1741.2 304.5L1744.4 307.7L1741.2 310.9L1738.0 307.7Z" fill="#ffa000"/><path d="M1749.2 296.5L1752.4 299.7L1749.2 302.9L1746.0 299.7Z" fill="#ffa000"/><path d="M1757.2 301.6L1760.4 304.8L1757.2 308.0L1754.0 304.8Z" fill="#ffa000"/><path d="M1765.2 296.5L1768.4 299.7L1765.2 302.9L1762.0 299.7Z" fill="#ffa000"/><path d="M1773.2 321.8L1776.4 325.0L1773.2 328.2L1770.0 325.0Z" fill="#ffa000"/><path d="M1100.7 176.6L1103.9 179.8L1100.7 183.0L1097.5 179.8Z" fill="#0000ff"/><path d="M1108.7 138.6L1111.9 141.8L1108.7 145.0L1105.5 141.8Z" fill="#0000ff"/><path d="M1116.7 144.7L1119.9 147.9L1116.7 151.1L1113.5 147.9Z" fill="#0000ff"/><path d="M1124.7 209.6L1127.9 212.8L1124.7 216.0L1121.5 212.8Z" fill="#0000ff"/><path d="M1132.7 164.7L1135.9 167.9L1132.7 171.1L1129.5 167.9Z" fill="#0000ff"/><path d="M1140.7 146.7L1143.9 149.9L1140.7 153.1L1137.5 149.9Z" fill="#0000ff"/><path d="M1148.7 137.6L1151.9 140.8L1148.7 144.0L1145.5 140.8Z" fill="#0000ff"/><path d="M1156.7 120.8L1159.9 124.0L1156.7 127.2L1153.5 124.0Z" fill="#0000ff"/><path d="M1164.7 143.7L1167.9 146.9L1164.7 150.1L1161.5 146.9Z" fill="#0000ff"/><path d="M1172.8 106.6L1176.0 109.8L1172.8 113.0L1169.6 109.8Z" fill="#0000ff"/><path d="M1180.8 122.6L1184.0 125.8L1180.8 129.0L1177.6 125.8Z" fill="#0000ff"/><path d="M1188.8 200.7L1192.0 203.9L1188.8 207.1L1185.6 203.9Z" fill="#0000ff"/><path d="M1196.8 144.7L1200.0 147.9L1196.8 151.1L1193.6 147.9Z" fill="#0000ff"/><path d="M1204.8 151.5L1208.0 154.7L1204.8 157.9L1201.6 154.7Z" fill="#0000ff"/><path d="M1212.8 146.7L1216.0 149.9L1212.8 153.1L1209.6 149.9Z" fill="#0000ff"/><path d="M1220.8 149.5L1224.0 152.7L1220.8 155.9L1217.6 152.7Z" fill="#0000ff"/><path d="M1228.8 132.8L1232.0 136.0L1228.8 139.2L1225.6 136.0Z" fill="#0000ff"/><path d="M1236.8 103.8L1240.0 107.0L1236.8 110.2L1233.6 107.0Z" fill="#0000ff"/><path d="M1244.8 113.8L1248.0 117.0L1244.8 120.2L1241.6 117.0Z" fill="#0000ff"/><path d="M1252.8 164.7L1256.0 167.9L1252.8 171.1L1249.6 167.9Z" fill="#0000ff"/><path d="M1260.8 183.7L1264.0 186.9L1260.8 190.1L1257.6 186.9Z" fill="#0000ff"/><path d="M1268.8 83.8L1272.0 87.0L1268.8 90.2L1265.6 87.0Z" fill="#0000ff"/><path d="M1276.8 153.5L1280.0 156.7L1276.8 159.9L1273.6 156.7Z" fill="#0000ff"/><path d="M1284.8 118.8L1288.0 122.0L1284.8 125.2L1281.6 122.0Z" fill="#0000ff"/><path d="M1292.8 171.5L1296.0 174.7L1292.8 177.9L1289.6 174.7Z" fill="#0000ff"/><path d="M1300.9 126.7L1304.1 129.9L1300.9 133.1L1297.7 129.9Z" fill="#0000ff"/><path d="M1308.9 115.5L1312.1 118.7L1308.9 121.9L1305.7 118.7Z" fill="#0000ff"/><path d="M1316.9 117.8L1320.1 121.0L1316.9 124.2L1313.7 121.0Z" fill="#0000ff"/><path d="M1324.9 105.9L1328.1 109.1L1324.9 112.3L1321.7 109.1Z" fill="#0000ff"/><path d="M1332.9 121.6L1336.1 124.8L1332.9 128.0L1329.7 124.8Z" fill="#0000ff"/><path d="M1340.9 121.6L1344.1 124.8L1340.9 128.0L1337.7 124.8Z" fill="#0000ff"/><path d="M1348.9 144.7L1352.1 147.9L1348.9 151.1L1345.7 147.9Z" fill="#0000ff"/><path d="M1356.9 195.6L1360.1 198.8L1356.9 202.0L1353.7 198.8Z" fill="#0000ff"/><path d="M1364.9 149.5L1368.1 152.7L1364.9 155.9L1361.7 152.7Z" fill="#0000ff"/><path d="M1372.9 143.7L1376.1 146.9L1372.9 150.1L1369.7 146.9Z" fill="#0000ff"/><path d="M1380.9 212.6L1384.1 215.8L1380.9 219.0L1377.7 215.8Z" fill="#0000ff"/><path d="M1388.9 224.8L1392.1 228.0L1388.9 231.2L1385.7 228.0Z" fill="#ff0000"/><path d="M1396.9 409.8L1400.1 413.0L1396.9 416.2L1393.7 413.0Z" fill="#0000ff"/><path d="M1404.9 415.6L1408.1 418.8L1404.9 422.0L1401.7 418.8Z" fill="#0000ff"/><path d="M1412.9 389.7L1416.1 392.9L1412.9 396.1L1409.7 392.9Z" fill="#0000ff"/><path d="M1420.9 397.7L1424.1 400.9L1420.9 404.1L1417.7 400.9Z" fill="#0000ff"/><path d="M1428.9 413.4L1432.1 416.6L1428.9 419.8L1425.7 416.6Z" fill="#0000ff"/><path d="M1437.0 394.8L1440.2 398.0L1437.0 401.2L1433.8 398.0Z" fill="#0000ff"/><path d="M1445.0 403.6L1448.2 406.8L1445.0 410.0L1441.8 406.8Z" fill="#0000ff"/><path d="M1453.0 416.7L1456.2 419.9L1453.0 423.1L1449.8 419.9Z" fill="#0000ff"/><path d="M1461.0 145.7L1464.2 148.9L1461.0 152.1L1457.8 148.9Z" fill="#0000ff"/><path d="M1469.0 173.6L1472.2 176.8L1469.0 180.0L1465.8 176.8Z" fill="#0000ff"/><path d="M1477.0 107.7L1480.2 110.9L1477.0 114.1L1473.8 110.9Z" fill="#0000ff"/><path d="M1485.0 129.7L1488.2 132.9L1485.0 136.1L1481.8 132.9Z" fill="#0000ff"/><path d="M1493.0 140.6L1496.2 143.8L1493.0 147.0L1489.8 143.8Z" fill="#0000ff"/><path d="M1501.0 172.6L1504.2 175.8L1501.0 179.0L1497.8 175.8Z" fill="#0000ff"/><path d="M1509.0 146.7L1512.2 149.9L1509.0 153.1L1505.8 149.9Z" fill="#0000ff"/><path d="M1517.0 157.6L1520.2 160.8L1517.0 164.0L1513.8 160.8Z" fill="#0000ff"/><path d="M1525.0 171.5L1528.2 174.7L1525.0 177.9L1521.8 174.7Z" fill="#0000ff"/><path d="M1533.0 128.4L1536.2 131.6L1533.0 134.8L1529.8 131.6Z" fill="#0000ff"/><path d="M1541.0 176.6L1544.2 179.8L1541.0 183.0L1537.8 179.8Z" fill="#0000ff"/><path d="M1549.0 162.8L1552.2 166.0L1549.0 169.2L1545.8 166.0Z" fill="#0000ff"/><path d="M1557.0 173.5L1560.2 176.7L1557.0 179.9L1553.8 176.7Z" fill="#0000ff"/><path d="M1565.0 185.7L1568.2 188.9L1565.0 192.1L1561.8 188.9Z" fill="#0000ff"/><path d="M1573.1 156.5L1576.3 159.7L1573.1 162.9L1569.9 159.7Z" fill="#0000ff"/><path d="M1581.1 156.5L1584.3 159.7L1581.1 162.9L1577.9 159.7Z" fill="#0000ff"/><path d="M1589.1 134.5L1592.3 137.7L1589.1 140.9L1585.9 137.7Z" fill="#0000ff"/><path d="M1597.1 180.6L1600.3 183.8L1597.1 187.0L1593.9 183.8Z" fill="#0000ff"/><path d="M1605.1 155.8L1608.3 159.0L1605.1 162.2L1601.9 159.0Z" fill="#0000ff"/><path d="M1613.1 167.7L1616.3 170.9L1613.1 174.1L1609.9 170.9Z" fill="#0000ff"/><path d="M1621.1 149.4L1624.3 152.6L1621.1 155.8L1617.9 152.6Z" fill="#0000ff"/><path d="M1629.1 189.5L1632.3 192.7L1629.1 195.9L1625.9 192.7Z" fill="#0000ff"/><path d="M1637.1 161.6L1640.3 164.8L1637.1 168.0L1633.9 164.8Z" fill="#0000ff"/><path d="M1645.1 130.4L1648.3 133.6L1645.1 136.8L1641.9 133.6Z" fill="#0000ff"/><path d="M1653.1 124.6L1656.3 127.8L1653.1 131.0L1649.9 127.8Z" fill="#0000ff"/><path d="M1661.1 109.4L1664.3 112.6L1661.1 115.8L1657.9 112.6Z" fill="#0000ff"/><path d="M1669.1 186.4L1672.3 189.6L1669.1 192.8L1665.9 189.6Z" fill="#0000ff"/><path d="M1677.1 186.4L1680.3 189.6L1677.1 192.8L1673.9 189.6Z" fill="#0000ff"/><path d="M1685.1 211.8L1688.3 215.0L1685.1 218.2L1681.9 215.0Z" fill="#0000ff"/><path d="M1693.1 165.4L1696.3 168.6L1693.1 171.8L1689.9 168.6Z" fill="#0000ff"/><path d="M1701.2 167.7L1704.4 170.9L1701.2 174.1L1698.0 170.9Z" fill="#0000ff"/><path d="M1709.2 166.4L1712.4 169.6L1709.2 172.8L1706.0 169.6Z" fill="#0000ff"/><path d="M1717.2 119.5L1720.4 122.7L1717.2 125.9L1714.0 122.7Z" fill="#0000ff"/><path d="M1725.2 198.6L1728.4 201.8L1725.2 205.0L1722.0 201.8Z" fill="#0000ff"/><path d="M1733.2 163.6L1736.4 166.8L1733.2 170.0L1730.0 166.8Z" fill="#0000ff"/><path d="M1741.2 197.6L1744.4 200.8L1741.2 204.0L1738.0 200.8Z" fill="#0000ff"/><path d="M1749.2 174.5L1752.4 177.7L1749.2 180.9L1746.0 177.7Z" fill="#0000ff"/><path d="M1757.2 183.6L1760.4 186.8L1757.2 190.0L1754.0 186.8Z" fill="#0000ff"/><path d="M1765.2 190.8L1768.4 194.0L1765.2 197.2L1762.0 194.0Z" fill="#0000ff"/><path d="M1773.2 153.7L1776.4 156.9L1773.2 160.1L1770.0 156.9Z" fill="#0000ff"/></svg>
<div class="t" style="left:1067.5px;top:179.3px;font-size:11.22px;line-height:13px;transform:scaleX(0.9091);transform-origin:0 50%;">2000</div>
<div class="t" style="left:1068.5px;top:291.1px;font-size:11.22px;line-height:13px;transform:scaleX(0.9091);transform-origin:0 50%;">1000</div>
<div class="t" style="left:1093.5px;top:402.3px;font-size:11.22px;line-height:13px;transform:scaleX(0.9091);transform-origin:0 50%;">0</div>
<div class="t" style="left:1103px;width:30px;text-align:center;top:424.3px;font-size:11.22px;line-height:13px;transform:scaleX(0.9091);">510</div>
<div class="t" style="left:1343px;width:30px;text-align:center;top:424.3px;font-size:11.22px;line-height:13px;transform:scaleX(0.9091);">540</div>
<div class="t" style="left:1583px;width:30px;text-align:center;top:424.3px;font-size:11.22px;line-height:13px;transform:scaleX(0.9091);">570</div>
<div class="t" style="left:1059.5px;top:37px;line-height:16px;font-size:12.9px;font-weight:bold">2025 Feb 8; (12242) Koon occults TYC 627-01086-1 Observed by Toshihiro Horikawa<span style="font-weight:normal;font-size:12.2px"> / PSF-Frame Photometry /</span></div>
<div class="t" style="left:1059.5px;top:440.5px;font-size:12.32px;line-height:15px;transform:scaleX(0.9091);transform-origin:0 50%;">Exp=165msec / Frm No.544.0 / Frm Mid= 11h44m42.8129s,  End= 42.8954s</div>
<div class="t" style="left:1050.7px;top:468.5px;font-size:12.65px;line-height:15px;transform:scaleX(0.9091);transform-origin:0 50%;">Current-</div>
<div class="t" style="left:1059.3px;top:484.2px;font-size:12.65px;line-height:15px;transform:scaleX(0.9091);transform-origin:0 50%;">Frame</div>
<div class="t" style="left:1111px;top:468.5px;font-size:12.65px;line-height:15px;transform:scaleX(0.9091);transform-origin:0 50%;">Luminous</div>
<div class="t" style="left:1110.5px;top:484.2px;font-size:12.65px;line-height:15px;transform:scaleX(0.9091);transform-origin:0 50%;">Intensity</div>
<div class="inp" style="left:1051px;top:502px;width:48px;height:18px;font-size:12.65px;line-height:14px;text-align:left;"><span style="display:inline-block;transform:scaleX(0.9091);transform-origin:0 50%">544.0</span></div>
<div class="inp" style="left:1107px;top:502px;width:56px;height:18px;font-size:12.65px;line-height:14px;text-align:left;"><span style="display:inline-block;transform:scaleX(0.9091);transform-origin:0 50%">1643.8</span></div>
<div class="" style="left:1170px;top:472px;width:160px;height:18px;background:repeating-conic-gradient(#f4f4f4 0 25%,#e4e4e4 0 50%) 0 0/2px 2px"></div>
<div class="btn" style="left:1170px;top:472px;width:17px;height:18px;font-size:11.55px;line-height:15px;"><span style="position:static;display:inline-block;transform:scaleX(0.9091);"></span></div>
<div style="left:1176px;top:477px;width:0;height:0;border-top:4px solid transparent;border-bottom:4px solid transparent;border-right:4px solid #000"></div>
<div class="btn" style="left:1313px;top:472px;width:17px;height:18px;font-size:11.55px;line-height:15px;"><span style="position:static;display:inline-block;transform:scaleX(0.9091);"></span></div>
<div style="left:1320px;top:477px;width:0;height:0;border-top:4px solid transparent;border-bottom:4px solid transparent;border-left:4px solid #000"></div>
<div class="btn" style="left:1223px;top:472px;width:18px;height:18px;font-size:11.55px;line-height:15px;"><span style="position:static;display:inline-block;transform:scaleX(0.9091);"></span></div>
<div class="btn" style="left:1171px;top:497px;width:41px;height:24px;font-size:12.65px;line-height:21px;letter-spacing:-0.4px"><span style="position:static;display:inline-block;transform:scaleX(0.9091);">-10Sec</span></div>
<div class="btn" style="left:1215px;top:497px;width:33px;height:24px;font-size:12.65px;line-height:21px;letter-spacing:-0.4px"><span style="position:static;display:inline-block;transform:scaleX(0.9091);">-1Sec</span></div>
<div class="btn" style="left:1251px;top:497px;width:35px;height:24px;font-size:12.65px;line-height:21px;letter-spacing:-0.4px"><span style="position:static;display:inline-block;transform:scaleX(0.9091);">+1Sec</span></div>
<div class="btn" style="left:1289px;top:497px;width:41px;height:24px;font-size:12.65px;line-height:21px;letter-spacing:-0.4px"><span style="position:static;display:inline-block;transform:scaleX(0.9091);">+10Sec</span></div>
<div class="t" style="left:1336.7px;top:476.0px;font-size:12.65px;line-height:15px;transform:scaleX(0.9091);transform-origin:0 50%;">Scale</div>
<div class="inp" style="left:1375px;top:470px;width:22px;height:19px;font-size:12.65px;line-height:15px;text-align:left;padding-left:2px"><span style="display:inline-block;transform:scaleX(0.9091);transform-origin:0 50%">4</span></div>
<div class="btn" style="left:1399px;top:469px;width:17px;height:12px;"><div style="position:absolute;left:50%;top:50%;margin-left:-3px;margin-top:-2.0px;width:0;height:0;border-left:3px solid transparent;border-right:3px solid transparent;border-bottom:3px solid #000;"></div></div>
<div class="btn" style="left:1399px;top:481px;width:17px;height:12px;"><div style="position:absolute;left:50%;top:50%;margin-left:-3px;margin-top:-2.0px;width:0;height:0;border-left:3px solid transparent;border-right:3px solid transparent;border-top:3px solid #000;"></div></div>
<div class="t" style="left:1339.5px;top:500.4px;font-size:12.65px;line-height:15px;transform:scaleX(0.9091);transform-origin:0 50%;">Radius</div>
<div class="inp" style="left:1375px;top:502px;width:22px;height:18px;font-size:12.65px;line-height:14px;text-align:left;padding-left:2px"><span style="display:inline-block;transform:scaleX(0.9091);transform-origin:0 50%">3</span></div>
<div class="btn" style="left:1399px;top:501px;width:17px;height:12px;"><div style="position:absolute;left:50%;top:50%;margin-left:-3px;margin-top:-2.0px;width:0;height:0;border-left:3px solid transparent;border-right:3px solid transparent;border-bottom:3px solid #000;"></div></div>
<div class="btn" style="left:1399px;top:513px;width:17px;height:12px;"><div style="position:absolute;left:50%;top:50%;margin-left:-3px;margin-top:-2.0px;width:0;height:0;border-left:3px solid transparent;border-right:3px solid transparent;border-top:3px solid #000;"></div></div>
<div class="chk" style="left:1051px;top:531px;width:9px;height:9px;background:#fff"><svg width="9" height="9" viewBox="0 0 9 9" style="position:absolute;left:1px;top:1px"><path d="M1 3.5 L3.5 6 L8 1.5" stroke="#000" stroke-width="1.9" fill="none" stroke-linecap="square"/></svg></div>
<div class="t" style="left:1068.5px;top:529.3px;font-size:12.65px;line-height:15px;transform:scaleX(0.9091);transform-origin:0 50%;">Show Image of Clicked point</div>
<div class="chk" style="left:1051px;top:547px;width:9px;height:9px;background:#fff"></div>
<div class="t" style="left:1068.5px;top:545.4px;font-size:12.65px;line-height:15px;transform:scaleX(0.9091);transform-origin:0 50%;">Reproduce Aperture Position</div>
<div class="btn" style="left:1225px;top:529px;width:73px;height:25px;font-size:12.65px;line-height:22px;"><span style="position:static;display:inline-block;transform:scaleX(0.9091);">Save Image</span></div>
<div class="btn" style="left:1304px;top:529px;width:117px;height:25px;font-size:12.65px;line-height:22px;"><span style="position:static;display:inline-block;transform:scaleX(0.9091);">Copy to ClipBoard</span></div>
<div class="gb" style="left:1422px;top:471px;width:49px;height:82px;"></div>
<div class="t gbl" style="left:1427px;top:465.5px;font-size:12.65px;line-height:13px;transform:scaleX(0.9091);transform-origin:0 50%;">Y Axis  </div>
<div class="t" style="left:1427px;top:476.0px;font-size:12.65px;line-height:15px;transform:scaleX(0.9091);transform-origin:0 50%;">Min Max</div>
<div class="btn" style="left:1427px;top:489px;width:17px;height:17px;font-size:11.55px;line-height:14px;"><span style="position:static;display:inline-block;transform:scaleX(0.9091);"></span></div>
<div style="left:1431.5px;top:495px;width:0;height:0;border-left:4px solid transparent;border-right:4px solid transparent;border-bottom:4px solid #000"></div>
<div class="btn" style="left:1427px;top:529px;width:17px;height:18px;font-size:11.55px;line-height:15px;"><span style="position:static;display:inline-block;transform:scaleX(0.9091);"></span></div>
<div style="left:1431.5px;top:536px;width:0;height:0;border-left:4px solid transparent;border-right:4px solid transparent;border-top:4px solid #000"></div>
<div class="btn" style="left:1448px;top:489px;width:17px;height:17px;font-size:11.55px;line-height:14px;"><span style="position:static;display:inline-block;transform:scaleX(0.9091);"></span></div>
<div style="left:1452.5px;top:495px;width:0;height:0;border-left:4px solid transparent;border-right:4px solid transparent;border-bottom:4px solid #000"></div>
<div class="btn" style="left:1448px;top:529px;width:17px;height:18px;font-size:11.55px;line-height:15px;"><span style="position:static;display:inline-block;transform:scaleX(0.9091);"></span></div>
<div style="left:1452.5px;top:536px;width:0;height:0;border-left:4px solid transparent;border-right:4px solid transparent;border-top:4px solid #000"></div>
<div class="btn" style="left:1427px;top:508px;width:17px;height:17px;font-size:11.55px;line-height:14px;"><span style="position:static;display:inline-block;transform:scaleX(0.9091);"></span></div>
<div class="" style="left:1448px;top:508px;width:17px;height:17px;border:1px solid #808080;background:repeating-conic-gradient(#404040 0 25%,#d0d0d0 0 50%) 0 0/2px 2px"></div>
<div class="gb" style="left:1474px;top:471px;width:60px;height:54px;"></div>
<div class="t gbl" style="left:1481px;top:465.5px;font-size:12.65px;line-height:13px;transform:scaleX(0.9091);transform-origin:0 50%;">Line</div>
<div class="chk" style="left:1482px;top:480px;width:9px;height:9px;background:#fff"><svg width="9" height="9" viewBox="0 0 9 9" style="position:absolute;left:1px;top:1px"><path d="M1 3.5 L3.5 6 L8 1.5" stroke="#000" stroke-width="1.9" fill="none" stroke-linecap="square"/></svg></div>
<div class="t" style="left:1498px;top:477.5px;font-size:12.65px;line-height:15px;transform:scaleX(0.9091);transform-origin:0 50%;">Axis</div>
<div class="chk" style="left:1482px;top:494px;width:9px;height:9px;background:#fff"><svg width="9" height="9" viewBox="0 0 9 9" style="position:absolute;left:1px;top:1px"><path d="M1 3.5 L3.5 6 L8 1.5" stroke="#000" stroke-width="1.9" fill="none" stroke-linecap="square"/></svg></div>
<div class="t" style="left:1498px;top:492.0px;font-size:12.65px;line-height:15px;transform:scaleX(0.9091);transform-origin:0 50%;">Data</div>
<div class="btn" style="left:1481px;top:506px;width:46px;height:15px;font-size:12.65px;line-height:12px;"><span style="position:static;display:inline-block;transform:scaleX(0.9091);">Hilight</span></div>
<div class="btn" style="left:1474px;top:529px;width:64px;height:27px;font-size:12.65px;line-height:24px;"><span style="position:static;display:inline-block;transform:scaleX(0.9091);">[3D] Image</span></div>
<div class="gb" style="left:1537px;top:471px;width:56px;height:54px;"></div>
<div class="t gbl" style="left:1545px;top:465.5px;font-size:12.65px;line-height:13px;transform:scaleX(0.9091);transform-origin:0 50%;">Width</div>
<div class="rad" style="left:1546px;top:484px;width:10px;height:10px;"><div style="position:absolute;left:3px;top:3px;width:4px;height:4px;border-radius:2px;background:#000"></div></div>
<div class="t" style="left:1563px;top:482.0px;font-size:12.65px;line-height:15px;transform:scaleX(0.9091);transform-origin:0 50%;">Part</div>
<div class="rad" style="left:1546px;top:505px;width:10px;height:10px;"></div>
<div class="t" style="left:1563px;top:503.0px;font-size:12.65px;line-height:15px;transform:scaleX(0.9091);transform-origin:0 50%;">Entire</div>
<div class="btn" style="left:1600px;top:470px;width:142px;height:17px;font-size:12.65px;line-height:14px;"><span style="position:static;display:inline-block;transform:scaleX(0.9091);">Correction for absorption</span></div>
<div class="btn" style="left:1600px;top:490px;width:102px;height:17px;font-size:12.65px;line-height:14px;"><span style="position:static;display:inline-block;transform:scaleX(0.9091);">Noise Reduction</span></div>
<div class="btn" style="left:1706px;top:490px;width:36px;height:17px;font-size:12.65px;line-height:14px;"><span style="position:static;display:inline-block;transform:scaleX(0.9091);">Reset</span></div>
<div class="btn" style="left:1755px;top:470px;width:36px;height:24px;font-size:12.65px;line-height:21px;"><span style="position:static;display:inline-block;transform:scaleX(0.9091);">close</span></div>
<div class="chk" style="left:1598px;top:510px;width:9px;height:9px;background:#fff"><svg width="9" height="9" viewBox="0 0 9 9" style="position:absolute;left:1px;top:1px"><path d="M1 3.5 L3.5 6 L8 1.5" stroke="#000" stroke-width="1.9" fill="none" stroke-linecap="square"/></svg></div>
<div class="t" style="left:1615.5px;top:508.7px;font-size:12.65px;line-height:15px;transform:scaleX(0.9091);transform-origin:0 50%;">Information</div>
<div class="gb" style="left:1698px;top:520px;width:94px;height:36px;"></div>
<div class="t gbl" style="left:1704px;top:514.5px;font-size:12.65px;line-height:13px;transform:scaleX(0.9091);transform-origin:0 50%;">Object</div>
<div class="chk" style="left:1748px;top:507px;width:9px;height:9px;background:#fff"><svg width="9" height="9" viewBox="0 0 9 9" style="position:absolute;left:1px;top:1px"><path d="M1 3.5 L3.5 6 L8 1.5" stroke="#000" stroke-width="1.9" fill="none" stroke-linecap="square"/></svg></div>
<div class="t" style="left:1765px;top:505.8px;font-size:12.65px;line-height:15px;transform:scaleX(0.9091);transform-origin:0 50%;">ID</div>
<div class="btn" style="left:1703px;top:531px;width:19px;height:17px;font-size:12.65px;line-height:14px;background:repeating-conic-gradient(#f4f4f4 0 25%,#e6e6e6 0 50%) 0 0/2px 2px"><span style="position:static;display:inline-block;transform:scaleX(0.9091);">A</span></div>
<div class="btn" style="left:1725px;top:531px;width:19px;height:17px;font-size:12.65px;line-height:14px;background:repeating-conic-gradient(#f4f4f4 0 25%,#e6e6e6 0 50%) 0 0/2px 2px"><span style="position:static;display:inline-block;transform:scaleX(0.9091);">B</span></div>
<div class="btn" style="left:1747px;top:531px;width:19px;height:17px;font-size:12.65px;line-height:14px;background:repeating-conic-gradient(#f4f4f4 0 25%,#e6e6e6 0 50%) 0 0/2px 2px"><span style="position:static;display:inline-block;transform:scaleX(0.9091);">C</span></div>
<div class="btn" style="left:1769px;top:531px;width:17px;height:17px;font-size:12.65px;line-height:14px;"><span style="position:static;display:inline-block;transform:scaleX(0.9091);">L</span></div>
<div class="btn" style="left:1283px;top:561px;width:121px;height:28px;font-size:14.85px;line-height:25px;font-weight:bold;color:#001060;"><span style="position:static;display:inline-block;transform:scaleX(0.9091);position:relative;left:0px">Lunar Identification</span></div>
<div class="btn" style="left:1414px;top:561px;width:168px;height:28px;font-size:14.85px;line-height:25px;font-weight:bold;"><span style="position:static;display:inline-block;transform:scaleX(0.9091);">Diffraction Analysis</span></div>
<div class="btn" style="left:1587px;top:561px;width:105px;height:28px;font-size:14.85px;line-height:25px;font-weight:bold;color:#001050;"><span style="position:static;display:inline-block;transform:scaleX(0.9091);">Make Report</span></div>
<div class="" style="left:1044px;top:595px;width:753px;height:2px;border-top:1px solid #a0a0a0;border-bottom:1px solid #fff"></div>
<div class="gb" style="left:1052px;top:623px;width:735px;height:90px;"></div>
<div class="t gbl" style="left:1058px;top:617.5px;font-size:12.65px;line-height:13px;transform:scaleX(0.9091);transform-origin:0 50%;">S/N vs Error</div>
<div class="t" style="left:1060px;top:632.2px;font-size:14.30px;line-height:17px;transform:scaleX(0.9091);transform-origin:0 50%;font-weight:bold;">S/N (Full drop)</div>
<div class="inp" style="left:1164px;top:631px;width:56px;height:26px;font-size:14.00px;line-height:22px;text-align:left;font-weight:bold;color:#0000ff;padding-left:6px"><span style="display:inline-block;transform:scaleX(1.0000);transform-origin:0 50%">2.9</span></div>
<div class="t" style="left:1244.4px;top:632.2px;font-size:14.30px;line-height:17px;transform:scaleX(0.9091);transform-origin:0 50%;font-weight:bold;">S/N</div>
<div class="inp" style="left:1276px;top:630px;width:47px;height:25px;font-size:14.00px;line-height:21px;text-align:left;font-weight:bold;color:#ff0000;padding-left:2px"><span style="display:inline-block;transform:scaleX(1.0000);transform-origin:0 50%">2.9</span></div>
<div class="t" style="left:1331.3px;top:632.2px;font-size:14.30px;line-height:17px;transform:scaleX(0.9091);transform-origin:0 50%;font-weight:bold;">expected on</div>
<div class="inp" style="left:1419px;top:630px;width:48px;height:25px;font-size:14.00px;line-height:21px;text-align:left;font-weight:bold;padding-left:2px"><span style="display:inline-block;transform:scaleX(1.0000);transform-origin:0 50%">6.6</span></div>
<div class="t" style="left:1475px;top:632.0px;font-size:14.30px;line-height:17px;transform:scaleX(0.9091);transform-origin:0 50%;font-weight:bold;">Mag drop</div>
<div class="t" style="left:1571.4px;top:632.0px;font-size:14.30px;line-height:17px;transform:scaleX(0.9091);transform-origin:0 50%;font-weight:bold;">Frame exposure</div>
<div class="inp" style="left:1691px;top:630px;width:48px;height:25px;font-size:14.00px;line-height:21px;text-align:left;font-weight:bold;padding-left:2px"><span style="display:inline-block;transform:scaleX(1.0000);transform-origin:0 50%">165</span></div>
<div class="t" style="left:1747px;top:632.0px;font-size:14.30px;line-height:17px;transform:scaleX(0.9091);transform-origin:0 50%;font-weight:bold;">msec</div>
<div class="t" style="left:1059.4px;top:663.8px;font-size:14.30px;line-height:17px;transform:scaleX(0.9091);transform-origin:0 50%;font-weight:bold;">Fresnel</div>
<div class="t" style="left:1059.4px;top:679.7px;font-size:14.30px;line-height:17px;transform:scaleX(0.9091);transform-origin:0 50%;font-weight:bold;">Number</div>
<div class="inp" style="left:1115px;top:670px;width:48px;height:25px;font-size:14.00px;line-height:21px;text-align:left;font-weight:bold;padding-left:2px"><span style="display:inline-block;transform:scaleX(1.0000);transform-origin:0 50%">752</span></div>
<div class="t" style="left:1179.3px;top:663.8px;font-size:14.30px;line-height:17px;transform:scaleX(0.9091);transform-origin:0 50%;font-weight:bold;">Lower Limit</div>
<div class="t" style="left:1186.7px;top:679.7px;font-size:14.30px;line-height:17px;transform:scaleX(0.9091);transform-origin:0 50%;font-weight:bold;">for detect</div>
<div class="inp" style="left:1260px;top:670px;width:55px;height:25px;font-size:14.00px;line-height:21px;text-align:left;font-weight:bold;color:#0000ff;padding-left:2px"><span style="display:inline-block;transform:scaleX(1.0000);transform-origin:0 50%">780</span></div>
<div class="t" style="left:1315.5px;top:672.3px;font-size:14.30px;line-height:17px;transform:scaleX(0.9091);transform-origin:0 50%;font-weight:bold;">msec</div>
<div class="t" style="left:1363.4px;top:664.9px;font-size:14.30px;line-height:17px;transform:scaleX(0.9091);transform-origin:0 50%;font-weight:bold;">Predicted</div>
<div class="t" style="left:1363.4px;top:679.5px;font-size:13.20px;line-height:16px;transform:scaleX(0.9091);transform-origin:0 50%;font-weight:bold;">Time Error</div>
<div class="inp" style="left:1436px;top:671px;width:63px;height:24px;font-size:14.00px;line-height:20px;text-align:left;font-weight:bold;color:#ff0000;padding-left:2px"><span style="display:inline-block;transform:scaleX(1.0000);transform-origin:0 50%">1160</span></div>
<div class="t" style="left:1499.3px;top:680.1px;font-size:14.30px;line-height:17px;transform:scaleX(0.9091);transform-origin:0 50%;font-weight:bold;">msec</div>
<div class="t" style="left:1547px;top:663.8px;font-size:14.30px;line-height:17px;transform:scaleX(0.9091);transform-origin:0 50%;font-weight:bold;">Expected Error for</div>
<div class="t" style="left:1547px;top:680.1px;font-size:14.30px;line-height:17px;transform:scaleX(0.9091);transform-origin:0 50%;font-weight:bold;">Analyzing event time</div>
<div class="inp" style="left:1691px;top:671px;width:48px;height:24px;font-size:14.00px;line-height:20px;text-align:left;font-weight:bold;padding-left:2px"><span style="display:inline-block;transform:scaleX(1.0000);transform-origin:0 50%">90.5</span></div>
<div class="t" style="left:1744.8px;top:680.1px;font-size:14.30px;line-height:17px;transform:scaleX(0.9091);transform-origin:0 50%;font-weight:bold;">msec</div></body></html>
